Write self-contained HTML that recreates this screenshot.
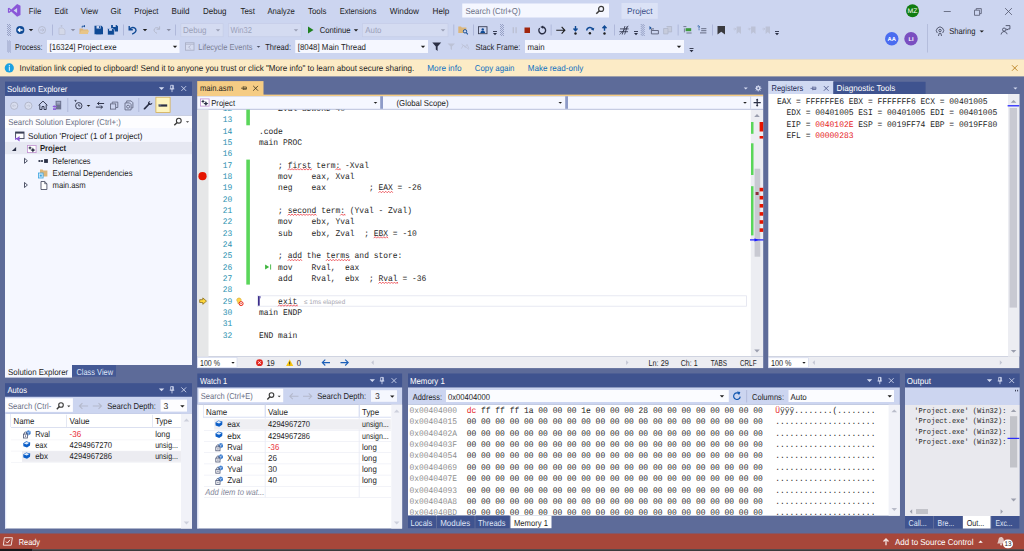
<!DOCTYPE html><html><head><meta charset="utf-8"><title>Project (Debugging) - Microsoft Visual Studio</title><style>html,body{margin:0;padding:0}body{width:1024px;height:551px;overflow:hidden;background:#5d6b99;font-family:'Liberation Sans',sans-serif}#r{display:block;position:absolute;left:0;top:0}#r text{white-space:pre}</style></head><body><svg id="r" width="1024" height="551" viewBox="0 0 1024 551" xml:space="preserve"><defs><clipPath id="edclip"><rect x="197" y="109.7" width="554" height="247"/></clipPath><clipPath id="memclip"><rect x="408" y="404.7" width="482" height="110.9"/></clipPath></defs><rect width="1024" height="551" fill="#5d6b99"/><rect x="0.00" y="0.00" width="1024.00" height="59.50" fill="#ccd5f0"/>
<svg x="7.60" y="3.80" width="13.2" height="13.2" viewBox="0 0 13.2 13.2" overflow="visible"><path d="M9.5 0.3L12.9 1.9V11.3L9.5 12.9L3.7 7.6L1.5 9.3L0.3 8.7V4.5L1.5 3.9L3.7 5.6ZM9.5 4.1L6 6.6L9.5 9.1ZM1.5 5.4V7.8L2.8 6.6Z" fill="#8a56d8"/></svg>
<rect x="462.25" y="3.50" width="146.75" height="14.00" fill="#f5f7ff"/>
<svg x="595.50" y="5.50" width="9" height="9" viewBox="0 0 9 9" overflow="visible"><circle cx="5.6" cy="3.4" r="2.5" fill="none" stroke="#3a3a3a" stroke-width="1.2"/><path d="M3.9 5.2L0.8 8.3" stroke="#3a3a3a" stroke-width="1.5"/></svg>
<rect x="621.50" y="3.00" width="36.25" height="15.75" fill="#dbe2f6"/>
<rect x="943.75" y="11.20" width="7.00" height="0.80" fill="#555a70"/>
<svg x="974.00" y="8.00" width="8" height="8" viewBox="0 0 8 8" overflow="visible"><path d="M0.5 2.2H5.6V7.3H0.5Z M2.2 2V0.6H7.3V5.6H5.8" fill="none" stroke="#50556c" stroke-width="0.8"/></svg>
<svg x="1004.50" y="7.50" width="8" height="8" viewBox="0 0 8 8" overflow="visible"><path d="M0.6 0.6L7.4 7.4M7.4 0.6L0.6 7.4" stroke="#50556c" stroke-width="0.8"/></svg>
<circle cx="912.50" cy="10.75" r="6.50" fill="#107c10"/>
<circle cx="891.75" cy="38.75" r="6.75" fill="#4a6cf0"/>
<circle cx="911.00" cy="38.75" r="6.75" fill="#7a4fc0"/>
<rect x="927.00" y="24.00" width="0.70" height="28.50" fill="#aab3d3"/>
<svg x="935.50" y="26.50" width="9" height="10" viewBox="0 0 9 10" overflow="visible"><circle cx="4.5" cy="4" r="1.2" fill="none" stroke="#3a3f55" stroke-width="0.8"/><path d="M1.8 6.5A3.6 3.6 0 1 1 7.2 6.5M3 9.5L3.6 6.8H5.4L6 9.5" fill="none" stroke="#3a3f55" stroke-width="0.8"/></svg>
<svg x="979.55" y="30.40" width="4.4" height="2.2" viewBox="0 0 4.4 2.2" overflow="visible"><path d="M0 0H4.4L2.2 2.2Z" fill="#1e1e1e"/></svg>
<svg x="1000.50" y="25.00" width="10" height="10" viewBox="0 0 10 10" overflow="visible"><circle cx="3.6" cy="4.6" r="1.6" fill="none" stroke="#3a3f55" stroke-width="0.8"/><path d="M0.6 9.5C1 7.2 2.4 6.6 3.6 6.6S6 7.2 6.6 9.2M5.2 0.6H9.4V4H7.4L6.4 5.2V4H5.8" fill="none" stroke="#3a3f55" stroke-width="0.8"/></svg>
<svg x="7.00" y="24.00" width="4" height="12" viewBox="0 0 4 12" overflow="visible"><rect x="0" y="0" width="1" height="1" fill="#97a1c6"/><rect x="2" y="0" width="1" height="1" fill="#97a1c6"/><rect x="1" y="1" width="1" height="1" fill="#97a1c6"/><rect x="3" y="1" width="1" height="1" fill="#97a1c6"/><rect x="0" y="2" width="1" height="1" fill="#97a1c6"/><rect x="2" y="2" width="1" height="1" fill="#97a1c6"/><rect x="1" y="3" width="1" height="1" fill="#97a1c6"/><rect x="3" y="3" width="1" height="1" fill="#97a1c6"/><rect x="0" y="4" width="1" height="1" fill="#97a1c6"/><rect x="2" y="4" width="1" height="1" fill="#97a1c6"/><rect x="1" y="5" width="1" height="1" fill="#97a1c6"/><rect x="3" y="5" width="1" height="1" fill="#97a1c6"/><rect x="0" y="6" width="1" height="1" fill="#97a1c6"/><rect x="2" y="6" width="1" height="1" fill="#97a1c6"/><rect x="1" y="7" width="1" height="1" fill="#97a1c6"/><rect x="3" y="7" width="1" height="1" fill="#97a1c6"/><rect x="0" y="8" width="1" height="1" fill="#97a1c6"/><rect x="2" y="8" width="1" height="1" fill="#97a1c6"/><rect x="1" y="9" width="1" height="1" fill="#97a1c6"/><rect x="3" y="9" width="1" height="1" fill="#97a1c6"/><rect x="0" y="10" width="1" height="1" fill="#97a1c6"/><rect x="2" y="10" width="1" height="1" fill="#97a1c6"/><rect x="1" y="11" width="1" height="1" fill="#97a1c6"/><rect x="3" y="11" width="1" height="1" fill="#97a1c6"/></svg>
<svg x="7.00" y="40.50" width="4" height="12" viewBox="0 0 4 12" overflow="visible"><rect x="0" y="0" width="1" height="1" fill="#97a1c6"/><rect x="2" y="0" width="1" height="1" fill="#97a1c6"/><rect x="1" y="1" width="1" height="1" fill="#97a1c6"/><rect x="3" y="1" width="1" height="1" fill="#97a1c6"/><rect x="0" y="2" width="1" height="1" fill="#97a1c6"/><rect x="2" y="2" width="1" height="1" fill="#97a1c6"/><rect x="1" y="3" width="1" height="1" fill="#97a1c6"/><rect x="3" y="3" width="1" height="1" fill="#97a1c6"/><rect x="0" y="4" width="1" height="1" fill="#97a1c6"/><rect x="2" y="4" width="1" height="1" fill="#97a1c6"/><rect x="1" y="5" width="1" height="1" fill="#97a1c6"/><rect x="3" y="5" width="1" height="1" fill="#97a1c6"/><rect x="0" y="6" width="1" height="1" fill="#97a1c6"/><rect x="2" y="6" width="1" height="1" fill="#97a1c6"/><rect x="1" y="7" width="1" height="1" fill="#97a1c6"/><rect x="3" y="7" width="1" height="1" fill="#97a1c6"/><rect x="0" y="8" width="1" height="1" fill="#97a1c6"/><rect x="2" y="8" width="1" height="1" fill="#97a1c6"/><rect x="1" y="9" width="1" height="1" fill="#97a1c6"/><rect x="3" y="9" width="1" height="1" fill="#97a1c6"/><rect x="0" y="10" width="1" height="1" fill="#97a1c6"/><rect x="2" y="10" width="1" height="1" fill="#97a1c6"/><rect x="1" y="11" width="1" height="1" fill="#97a1c6"/><rect x="3" y="11" width="1" height="1" fill="#97a1c6"/></svg>
<svg x="16.00" y="25.75" width="8.5" height="8.5" viewBox="0 0 8.5 8.5" overflow="visible"><circle cx="4.25" cy="4.25" r="4.1" fill="#0f4a95"/><path d="M6.6 4.25H2.6M4.2 2.4L2.3 4.25L4.2 6.1" stroke="#fff" stroke-width="1.3" fill="none"/></svg>
<svg x="28.80" y="29.10" width="4.4" height="2.2" viewBox="0 0 4.4 2.2" overflow="visible"><path d="M0 0H4.4L2.2 2.2Z" fill="#1e1e1e"/></svg>
<svg x="38.00" y="26.00" width="8" height="8" viewBox="0 0 8 8" overflow="visible"><circle cx="4" cy="4" r="3.5" fill="none" stroke="#b4b9cc" stroke-width="0.9"/><path d="M2 4H5.8M4.4 2.6L5.9 4L4.4 5.4" stroke="#b4b9cc" stroke-width="0.9" fill="none"/></svg>
<rect x="52.00" y="24.50" width="0.70" height="11.00" fill="#a3add0"/>
<svg x="58.00" y="25.00" width="8" height="10" viewBox="0 0 8 10" overflow="visible"><path d="M1 3H5L7 5V9.5H1ZM2.5 0.8H4.5M3.5 0V2" fill="#d3d8e8" stroke="#b9bfd3" stroke-width="0.7"/></svg>
<svg x="70.80" y="29.10" width="4.4" height="2.2" viewBox="0 0 4.4 2.2" overflow="visible"><path d="M0 0H4.4L2.2 2.2Z" fill="#8a8fa5"/></svg>
<svg x="79.00" y="25.00" width="10.5" height="9.5" viewBox="0 0 10.5 9.5" overflow="visible"><path d="M0.5 9V3.5H3.5L4.3 4.4H9V9Z" fill="#dcb67a"/><path d="M0.5 9L2.3 5.6H10.3L8.6 9Z" fill="#e8c588"/><path d="M3.2 2.6V1.2H6M6 1.2L5 0.3M6 1.2L5 2.1" stroke="#0f4a95" stroke-width="0.9" fill="none"/></svg>
<svg x="94.50" y="25.75" width="8.5" height="8.5" viewBox="0 0 8.5 8.5" overflow="visible"><path d="M0 0H7L8.5 1.5V8.5H0Z" fill="#0f4a95"/><rect x="2" y="0" width="4.2" height="2.8" fill="#ccd5f0"/><rect x="4.6" y="0.4" width="1" height="2" fill="#0f4a95"/><rect x="1.6" y="5" width="5.2" height="3.5" fill="#0f4a95"/></svg>
<svg x="107.50" y="25.00" width="10.5" height="10" viewBox="0 0 10.5 10" overflow="visible"><path d="M3.6 0H9L10.5 1.3V6.4H3.6Z" fill="#0f4a95"/><rect x="5.4" y="0" width="2.8" height="2" fill="#ccd5f0"/><path d="M0 3.6H5.6L6.9 4.9V10H0Z" fill="#0f4a95" stroke="#ccd5f0" stroke-width="0.7"/><rect x="1.6" y="3.8" width="2.8" height="2" fill="#ccd5f0"/></svg>
<rect x="123.00" y="24.50" width="0.70" height="11.00" fill="#a3add0"/>
<svg x="128.00" y="25.50" width="9.5" height="9" viewBox="0 0 9.5 9" overflow="visible"><path d="M1.2 0.6V4.2H4.8" fill="none" stroke="#0f4a95" stroke-width="1.4"/><path d="M1.6 3.8C3 1.6 6.3 1.2 7.6 3.4S7 7.6 4.2 8.6" fill="none" stroke="#0f4a95" stroke-width="1.4"/></svg>
<svg x="142.80" y="29.10" width="4.4" height="2.2" viewBox="0 0 4.4 2.2" overflow="visible"><path d="M0 0H4.4L2.2 2.2Z" fill="#1e1e1e"/></svg>
<svg x="153.00" y="25.50" width="8" height="9" viewBox="0 0 8 9" overflow="visible"><path d="M6.6 0.8V3.8H3.6" fill="none" stroke="#b4b9cc" stroke-width="1"/><path d="M6.3 3.5C5 1.8 2.4 1.6 1.4 3.4S1.8 7 4 7.8" fill="none" stroke="#b4b9cc" stroke-width="1"/></svg>
<svg x="166.55" y="29.10" width="4.4" height="2.2" viewBox="0 0 4.4 2.2" overflow="visible"><path d="M0 0H4.4L2.2 2.2Z" fill="#8a8fa5"/></svg>
<rect x="175.00" y="24.50" width="0.70" height="11.00" fill="#a3add0"/>
<rect x="180.90" y="23.70" width="42.20" height="13.10" fill="#d4dbf1" stroke="#c3cbe7" stroke-width="0.6"/>
<svg x="215.80" y="29.30" width="4.4" height="2.2" viewBox="0 0 4.4 2.2" overflow="visible"><path d="M0 0H4.4L2.2 2.2Z" fill="#9a9fb5"/></svg>
<rect x="228.40" y="23.70" width="72.80" height="13.10" fill="#d4dbf1" stroke="#c3cbe7" stroke-width="0.6"/>
<svg x="293.80" y="29.30" width="4.4" height="2.2" viewBox="0 0 4.4 2.2" overflow="visible"><path d="M0 0H4.4L2.2 2.2Z" fill="#9a9fb5"/></svg>
<svg x="308.00" y="26.50" width="5.5" height="7" viewBox="0 0 5.5 7" overflow="visible"><path d="M0 0L5.5 3.5L0 7Z" fill="#1f801f"/></svg>
<svg x="353.80" y="29.30" width="4.4" height="2.2" viewBox="0 0 4.4 2.2" overflow="visible"><path d="M0 0H4.4L2.2 2.2Z" fill="#1e1e1e"/></svg>
<rect x="362.50" y="23.70" width="85.50" height="13.10" fill="#d4dbf1" stroke="#c3cbe7" stroke-width="0.6"/>
<svg x="440.80" y="29.30" width="4.4" height="2.2" viewBox="0 0 4.4 2.2" overflow="visible"><path d="M0 0H4.4L2.2 2.2Z" fill="#9a9fb5"/></svg>
<rect x="453.50" y="24.50" width="0.70" height="11.00" fill="#a3add0"/>
<svg x="458.00" y="25.50" width="10.5" height="9.5" viewBox="0 0 10.5 9.5" overflow="visible"><path d="M0.3 7.5V1H3L3.8 1.9H8.4V7.5Z" fill="#dcb67a"/><circle cx="7" cy="5.8" r="1.7" fill="#ccd5f0" stroke="#0f4a95" stroke-width="0.9"/><path d="M8.2 7L9.8 8.8" stroke="#0f4a95" stroke-width="1.1"/></svg>
<rect x="473.00" y="24.50" width="0.70" height="11.00" fill="#a3add0"/>
<svg x="478.00" y="25.50" width="9.5" height="9" viewBox="0 0 9.5 9" overflow="visible"><rect x="0.5" y="1.2" width="8.5" height="7" fill="none" stroke="#3a3f55" stroke-width="0.9"/><path d="M2.4 7.4C2.6 5.6 3.6 5.2 4.75 5.2S6.9 5.6 7.1 7.4Z" fill="#0f4a95"/><circle cx="4.75" cy="3.9" r="1.2" fill="#0f4a95"/></svg>
<svg x="493.00" y="31.00" width="4" height="4.5" viewBox="0 0 4 4.5" overflow="visible"><rect x="0" y="0" width="4" height="0.9" fill="#2a2f45"/><path d="M0 2H4L2 4.2Z" fill="#2a2f45"/></svg>
<svg x="500.00" y="24.00" width="4" height="12" viewBox="0 0 4 12" overflow="visible"><rect x="0" y="0" width="1" height="1" fill="#97a1c6"/><rect x="2" y="0" width="1" height="1" fill="#97a1c6"/><rect x="1" y="1" width="1" height="1" fill="#97a1c6"/><rect x="3" y="1" width="1" height="1" fill="#97a1c6"/><rect x="0" y="2" width="1" height="1" fill="#97a1c6"/><rect x="2" y="2" width="1" height="1" fill="#97a1c6"/><rect x="1" y="3" width="1" height="1" fill="#97a1c6"/><rect x="3" y="3" width="1" height="1" fill="#97a1c6"/><rect x="0" y="4" width="1" height="1" fill="#97a1c6"/><rect x="2" y="4" width="1" height="1" fill="#97a1c6"/><rect x="1" y="5" width="1" height="1" fill="#97a1c6"/><rect x="3" y="5" width="1" height="1" fill="#97a1c6"/><rect x="0" y="6" width="1" height="1" fill="#97a1c6"/><rect x="2" y="6" width="1" height="1" fill="#97a1c6"/><rect x="1" y="7" width="1" height="1" fill="#97a1c6"/><rect x="3" y="7" width="1" height="1" fill="#97a1c6"/><rect x="0" y="8" width="1" height="1" fill="#97a1c6"/><rect x="2" y="8" width="1" height="1" fill="#97a1c6"/><rect x="1" y="9" width="1" height="1" fill="#97a1c6"/><rect x="3" y="9" width="1" height="1" fill="#97a1c6"/><rect x="0" y="10" width="1" height="1" fill="#97a1c6"/><rect x="2" y="10" width="1" height="1" fill="#97a1c6"/><rect x="1" y="11" width="1" height="1" fill="#97a1c6"/><rect x="3" y="11" width="1" height="1" fill="#97a1c6"/></svg>
<rect x="512.60" y="27.20" width="1.40" height="6.00" fill="#bcc1d4"/>
<rect x="515.40" y="27.20" width="1.40" height="6.00" fill="#bcc1d4"/>
<rect x="524.50" y="27.50" width="5.50" height="5.50" fill="#a1260d"/>
<svg x="537.50" y="25.50" width="8.5" height="9" viewBox="0 0 8.5 9" overflow="visible"><path d="M2.2 2.6A3.4 3.4 0 1 0 5.2 1.5" fill="none" stroke="#2a2f45" stroke-width="1.35"/><path d="M5.6 0L5.6 3.2L2.8 1.6Z" fill="#2a2f45"/></svg>
<rect x="550.75" y="24.50" width="0.70" height="11.00" fill="#a3add0"/>
<svg x="556.25" y="26.00" width="9.5" height="8.5" viewBox="0 0 9.5 8.5" overflow="visible"><path d="M0 4.25H8.4M5.4 0.9L8.6 4.25L5.4 7.6" fill="none" stroke="#1e1e1e" stroke-width="1.1"/></svg>
<svg x="572.50" y="25.50" width="6" height="9.5" viewBox="0 0 6 9.5" overflow="visible"><path d="M3 0.6V4.6M1 3L3 5.2L5 3" fill="none" stroke="#0f4a95" stroke-width="1.4"/><circle cx="3" cy="8" r="1.2" fill="#1e1e1e"/></svg>
<svg x="585.50" y="25.50" width="9.5" height="9.5" viewBox="0 0 9.5 9.5" overflow="visible"><path d="M1.2 5C1.4 1.6 6.4 0.8 7.6 4.2" fill="none" stroke="#0f4a95" stroke-width="1.4"/><path d="M8.8 2.2L8 5.2L5.4 3.8Z" fill="#0f4a95"/><circle cx="4.4" cy="7.8" r="1.2" fill="#1e1e1e"/></svg>
<svg x="601.50" y="25.50" width="6" height="9.5" viewBox="0 0 6 9.5" overflow="visible"><path d="M3 5.2V1.2M1 2.8L3 0.6L5 2.8" fill="none" stroke="#0f4a95" stroke-width="1.4"/><circle cx="3" cy="8" r="1.2" fill="#1e1e1e"/></svg>
<rect x="614.00" y="24.50" width="0.70" height="11.00" fill="#a3add0"/>
<svg x="619.00" y="25.50" width="10" height="9.5" viewBox="0 0 10 9.5" overflow="visible"><path d="M3.2 9L6 0.5M5.6 9L8.4 0.5M1 3.4H9.6M0.4 6.2H9" fill="none" stroke="#2a2f45" stroke-width="0.8"/><path d="M0.5 9L9.5 0.5" stroke="#2a2f45" stroke-width="0.6"/></svg>
<svg x="634.00" y="31.00" width="4" height="4.5" viewBox="0 0 4 4.5" overflow="visible"><rect x="0" y="0" width="4" height="0.9" fill="#2a2f45"/><path d="M0 2H4L2 4.2Z" fill="#2a2f45"/></svg>
<svg x="640.75" y="24.00" width="4" height="12" viewBox="0 0 4 12" overflow="visible"><rect x="0" y="0" width="1" height="1" fill="#97a1c6"/><rect x="2" y="0" width="1" height="1" fill="#97a1c6"/><rect x="1" y="1" width="1" height="1" fill="#97a1c6"/><rect x="3" y="1" width="1" height="1" fill="#97a1c6"/><rect x="0" y="2" width="1" height="1" fill="#97a1c6"/><rect x="2" y="2" width="1" height="1" fill="#97a1c6"/><rect x="1" y="3" width="1" height="1" fill="#97a1c6"/><rect x="3" y="3" width="1" height="1" fill="#97a1c6"/><rect x="0" y="4" width="1" height="1" fill="#97a1c6"/><rect x="2" y="4" width="1" height="1" fill="#97a1c6"/><rect x="1" y="5" width="1" height="1" fill="#97a1c6"/><rect x="3" y="5" width="1" height="1" fill="#97a1c6"/><rect x="0" y="6" width="1" height="1" fill="#97a1c6"/><rect x="2" y="6" width="1" height="1" fill="#97a1c6"/><rect x="1" y="7" width="1" height="1" fill="#97a1c6"/><rect x="3" y="7" width="1" height="1" fill="#97a1c6"/><rect x="0" y="8" width="1" height="1" fill="#97a1c6"/><rect x="2" y="8" width="1" height="1" fill="#97a1c6"/><rect x="1" y="9" width="1" height="1" fill="#97a1c6"/><rect x="3" y="9" width="1" height="1" fill="#97a1c6"/><rect x="0" y="10" width="1" height="1" fill="#97a1c6"/><rect x="2" y="10" width="1" height="1" fill="#97a1c6"/><rect x="1" y="11" width="1" height="1" fill="#97a1c6"/><rect x="3" y="11" width="1" height="1" fill="#97a1c6"/></svg>
<svg x="649.00" y="25.50" width="10" height="9" viewBox="0 0 10 9" overflow="visible"><path d="M0.5 0.5L2.6 2.4L0.5 4.2Z" fill="#0f4a95"/><path d="M2.4 5H9.4V8.4H2.4ZM2.4 5V3.4H5" fill="none" stroke="#5a6078" stroke-width="0.9"/></svg>
<svg x="663.00" y="25.50" width="10" height="9" viewBox="0 0 10 9" overflow="visible"><path d="M0.6 3H5V8.4H0.6ZM3.6 1H8.6V6.4H5" fill="#c6cbdc" stroke="#b0b6ca" stroke-width="0.8"/></svg>
<rect x="677.75" y="24.50" width="0.70" height="11.00" fill="#a3add0"/>
<svg x="683.00" y="26.00" width="9" height="8" viewBox="0 0 9 8" overflow="visible"><path d="M0.4 0.6H3.4" stroke="#5a6078" stroke-width="0.8"/><rect x="2.6" y="2.2" width="5.6" height="3" fill="#3c9a3c"/><path d="M3.4 7H8.6" stroke="#5a6078" stroke-width="0.8"/><path d="M1.4 2.4V6.4" stroke="#5a6078" stroke-width="0.7"/></svg>
<svg x="697.00" y="25.50" width="10" height="9" viewBox="0 0 10 9" overflow="visible"><path d="M0.6 0.6C2 -0.2 3 1 2 2.2V3" fill="none" stroke="#0f4a95" stroke-width="0.9"/><rect x="1.6" y="3.8" width="0.9" height="0.9" fill="#0f4a95"/><path d="M4.2 3.2H9.4M4.2 5.2H9.4M3 7.4H9.4" stroke="#5a6078" stroke-width="0.9"/></svg>
<rect x="712.00" y="24.50" width="0.70" height="11.00" fill="#a3add0"/>
<svg x="717.50" y="26.00" width="7.5" height="8.5" viewBox="0 0 7.5 8.5" overflow="visible"><path d="M0 0H7.5V8.5L3.75 5.8L0 8.5Z" fill="#3a3a3e"/></svg>
<svg x="733.00" y="26.00" width="9" height="8.5" viewBox="0 0 9 8.5" overflow="visible"><path d="M3.6 0.5H8V8L5.8 6L3.6 8Z" fill="#bcc2d6"/><path d="M0.4 3H2.8M1.6 1.8L2.8 3L1.6 4.2" stroke="#bcc2d6" stroke-width="0.8" fill="none"/></svg>
<svg x="747.50" y="26.00" width="9" height="8.5" viewBox="0 0 9 8.5" overflow="visible"><path d="M3.6 0.5H8V8L5.8 6L3.6 8Z" fill="#bcc2d6"/><path d="M0.4 3H2.8M1.6 1.8L2.8 3L1.6 4.2" stroke="#bcc2d6" stroke-width="0.8" fill="none"/></svg>
<svg x="762.00" y="26.00" width="9" height="8.5" viewBox="0 0 9 8.5" overflow="visible"><path d="M3.6 0.5H8V8L5.8 6L3.6 8Z" fill="#bcc2d6"/><path d="M0.4 3H2.8M1.6 1.8L2.8 3L1.6 4.2" stroke="#bcc2d6" stroke-width="0.8" fill="none"/></svg>
<svg x="775.00" y="31.00" width="4" height="4.5" viewBox="0 0 4 4.5" overflow="visible"><rect x="0" y="0" width="4" height="0.9" fill="#2a2f45"/><path d="M0 2H4L2 4.2Z" fill="#2a2f45"/></svg>
<rect x="47.00" y="40.00" width="132.50" height="13.00" fill="#f5f7ff"/>
<svg x="172.80" y="45.70" width="4.4" height="2.2" viewBox="0 0 4.4 2.2" overflow="visible"><path d="M0 0H4.4L2.2 2.2Z" fill="#1e1e1e"/></svg>
<svg x="185.00" y="42.30" width="9.5" height="8.4" viewBox="0 0 9.5 8.4" overflow="visible"><rect x="0.5" y="0.5" width="8.5" height="7.4" fill="#d6dcf0" stroke="#a9afc6" stroke-width="0.9"/><path d="M0.5 2H9" stroke="#a9afc6" stroke-width="0.7"/><path d="M5.6 3.2L3.6 4.9L5.6 6.6" stroke="#a9afc6" stroke-width="0.8" fill="none"/></svg>
<svg x="256.70" y="45.90" width="3.6" height="1.8" viewBox="0 0 3.6 1.8" overflow="visible"><path d="M0 0H3.6L1.8 1.8Z" fill="#4a4f63"/></svg>
<rect x="295.25" y="40.00" width="132.75" height="13.00" fill="#f5f7ff"/>
<svg x="420.80" y="45.70" width="4.4" height="2.2" viewBox="0 0 4.4 2.2" overflow="visible"><path d="M0 0H4.4L2.2 2.2Z" fill="#1e1e1e"/></svg>
<svg x="432.00" y="42.00" width="9.5" height="9.5" viewBox="0 0 9.5 9.5" overflow="visible"><path d="M0.3 0.6H9.2L5.6 4.6V9L3.8 7.6V4.6Z" fill="#2a2f45"/></svg>
<svg x="447.00" y="42.50" width="8.5" height="8.5" viewBox="0 0 8.5 8.5" overflow="visible"><path d="M0.5 1H8L5 4V7.6L3.6 6.6V4Z" fill="#bcc2d6"/></svg>
<svg x="461.00" y="43.00" width="8.5" height="7" viewBox="0 0 8.5 7" overflow="visible"><path d="M0.4 5.6L2.4 2L4.2 4.4L6 1.4L8 5.6M0.5 1L8 6.4" fill="none" stroke="#bcc2d6" stroke-width="0.8"/></svg>
<rect x="525.00" y="40.00" width="159.00" height="13.00" fill="#f5f7ff"/>
<svg x="676.80" y="45.70" width="4.4" height="2.2" viewBox="0 0 4.4 2.2" overflow="visible"><path d="M0 0H4.4L2.2 2.2Z" fill="#1e1e1e"/></svg>
<svg x="689.50" y="48.00" width="4" height="4.5" viewBox="0 0 4 4.5" overflow="visible"><rect x="0" y="0" width="4" height="0.9" fill="#2a2f45"/><path d="M0 2H4L2 4.2Z" fill="#2a2f45"/></svg>
<rect x="0.00" y="59.20" width="1024.00" height="17.20" fill="#fcebc6"/>
<circle cx="9.30" cy="67.90" r="4.60" fill="#1ba1e2"/>
<rect x="8.85" y="65.00" width="0.90" height="1.00" fill="#fff"/>
<rect x="8.85" y="66.60" width="0.90" height="4.20" fill="#fff"/>
<svg x="1011.50" y="64.75" width="6.5" height="6.5" viewBox="0 0 6.5 6.5" overflow="visible"><path d="M0.5 0.5L6 6M6 0.5L0.5 6" stroke="#b8801f" stroke-width="0.9"/></svg>
<rect x="5.00" y="81.60" width="187.00" height="14.20" fill="#3f538f"/>
<svg x="158.85" y="87.25" width="5.4" height="2.7" viewBox="0 0 5.4 2.7" overflow="visible"><path d="M0 0H5.4L2.7 2.7Z" fill="#d6dcf2"/></svg>
<svg x="169.50" y="84.90" width="5" height="7.5" viewBox="0 0 5 7.5" overflow="visible"><path d="M1.2 0.4H3.8V4H1.2ZM0.2 4H4.8M2.5 4V7.2" fill="none" stroke="#d6dcf2" stroke-width="0.8"/><path d="M3.3 0.4V4" stroke="#d6dcf2" stroke-width="0.9"/></svg>
<svg x="180.95" y="85.70" width="5.6" height="5.6" viewBox="0 0 5.6 5.6" overflow="visible"><path d="M0.4 0.4L5.2 5.2M5.2 0.4L0.4 5.2" stroke="#d6dcf2" stroke-width="0.85"/></svg>
<rect x="5.00" y="96.00" width="187.00" height="19.50" fill="#ccd5f0"/>
<svg x="10.00" y="101.60" width="8.4" height="8.4" viewBox="0 0 8.4 8.4" overflow="visible"><circle cx="4.2" cy="4.2" r="3.6" fill="#d9deef" stroke="#b4b9cc" stroke-width="1"/><path d="M6 4.2H2.6M3.9 2.8L2.5 4.2L3.9 5.6" stroke="#c2c7d8" stroke-width="0.9" fill="none"/></svg>
<svg x="24.20" y="101.60" width="8.4" height="8.4" viewBox="0 0 8.4 8.4" overflow="visible"><circle cx="4.2" cy="4.2" r="3.6" fill="#d9deef" stroke="#b4b9cc" stroke-width="1"/><path d="M2.4 4.2H5.8M4.5 2.8L5.9 4.2L4.5 5.6" stroke="#c2c7d8" stroke-width="0.9" fill="none"/></svg>
<svg x="38.00" y="100.30" width="10" height="10" viewBox="0 0 10 10" overflow="visible"><path d="M0.6 5L5 0.8L9.4 5M1.8 4.4V9.2H4V6.2H6V9.2H8.2V4.4" fill="none" stroke="#2a2f45" stroke-width="0.9"/></svg>
<svg x="52.00" y="100.30" width="10" height="10" viewBox="0 0 10 10" overflow="visible"><rect x="3.6" y="0.5" width="5.6" height="8.6" fill="#6d7390"/><path d="M4.6 2H8.2M4.6 3.6H8.2" stroke="#ccd5f0" stroke-width="0.7"/><path d="M0.4 6.2L2.6 4.6V5.6H4.8V6.8H2.6V7.8Z" fill="#8b57d6"/><rect x="1" y="8" width="3" height="1.6" fill="#8b57d6"/></svg>
<rect x="67.50" y="98.00" width="0.70" height="14.00" fill="#a3add0"/>
<svg x="74.00" y="99.80" width="9" height="10.5" viewBox="0 0 9 10.5" overflow="visible"><circle cx="4.8" cy="6" r="3.2" fill="none" stroke="#2a2f45" stroke-width="0.9"/><path d="M4.8 4.2V6.2H6.4" stroke="#2a2f45" stroke-width="0.8" fill="none"/><path d="M0.4 0.6H2.6" stroke="#2a2f45" stroke-width="0.7"/><path d="M1.5 0.6V2.2" stroke="#2a2f45" stroke-width="0.7"/></svg>
<svg x="86.70" y="104.90" width="3.6" height="1.8" viewBox="0 0 3.6 1.8" overflow="visible"><path d="M0 0H3.6L1.8 1.8Z" fill="#1e1e1e"/></svg>
<svg x="95.50" y="101.30" width="9" height="8" viewBox="0 0 9 8" overflow="visible"><path d="M2 2.2H8.6M2 2.2L3.8 0.6M2 2.2L3.8 3.8M7 5.8H0.4M7 5.8L5.2 4.2M7 5.8L5.2 7.4" fill="none" stroke="#2a2f45" stroke-width="0.95"/></svg>
<svg x="110.00" y="101.30" width="8.5" height="8.5" viewBox="0 0 8.5 8.5" overflow="visible"><rect x="0.5" y="2.6" width="5.2" height="5.2" fill="#ccd5f0" stroke="#5a6078" stroke-width="0.8"/><path d="M2.2 2.4V0.8H7.8V6.2H6" fill="none" stroke="#5a6078" stroke-width="0.8"/></svg>
<svg x="124.50" y="100.30" width="10.5" height="10.5" viewBox="0 0 10.5 10.5" overflow="visible"><path d="M0.5 2.6H5L6.6 4.2V9.6H0.5Z" fill="#ccd5f0" stroke="#5a6078" stroke-width="0.8"/><path d="M2.2 2.4V0.6H6.6L8.4 2.4V7.6H6.8" fill="none" stroke="#5a6078" stroke-width="0.8"/><circle cx="3.6" cy="6.4" r="1.5" fill="none" stroke="#5a6078" stroke-width="0.8"/></svg>
<rect x="138.50" y="98.00" width="0.70" height="14.00" fill="#a3add0"/>
<svg x="143.00" y="100.60" width="10" height="9.5" viewBox="0 0 10 9.5" overflow="visible"><path d="M9.4 2.2C9.2 3.8 7.8 4.8 6.2 4.4L2 8.8C1.2 9.4 0.2 8.6 0.8 7.6L5 3.4C4.6 1.8 5.8 0.4 7.4 0.4L6.2 2L7.4 3.2Z" fill="#2a2f45"/></svg>
<rect x="155.90" y="97.20" width="14.20" height="15.20" fill="#fdf4bf" stroke="#d3aa4a" stroke-width="0.75"/>
<svg x="158.60" y="103.80" width="9" height="3.5" viewBox="0 0 9 3.5" overflow="visible"><rect x="0" y="0.6" width="8.6" height="2.2" fill="#2a2f45"/><rect x="0" y="0.6" width="2.6" height="1" fill="#8f94a8"/></svg>
<rect x="5.00" y="115.50" width="187.00" height="12.50" fill="#fdfdff"/>
<svg x="173.50" y="117.50" width="8.5" height="8.5" viewBox="0 0 8.5 8.5" overflow="visible"><circle cx="5.3" cy="3.2" r="2.4" fill="none" stroke="#3a3a3a" stroke-width="1.1"/><path d="M3.7 4.9L0.8 7.8" stroke="#3a3a3a" stroke-width="1.4"/></svg>
<svg x="185.90" y="121.20" width="3.2" height="1.6" viewBox="0 0 3.2 1.6" overflow="visible"><path d="M0 0H3.2L1.6 1.6Z" fill="#3a3a3a"/></svg>
<rect x="5.00" y="128.00" width="187.00" height="237.00" fill="#f5f7ff"/>
<rect x="5.00" y="141.90" width="187.00" height="12.30" fill="#e6e8f2"/>
<svg x="14.00" y="131.50" width="10.5" height="10" viewBox="0 0 10.5 10" overflow="visible"><rect x="1.6" y="0.5" width="8.4" height="6.6" fill="#fff" stroke="#3a3f55" stroke-width="0.9"/><rect x="1.6" y="0.5" width="8.4" height="1.6" fill="#3a3f55"/><path d="M5.6 4.4L2.6 6.8L1 6V8.4L2.6 7.7L5.6 10V4.4ZM1.6 6.6V7.9L2.4 7.2Z" fill="#8b57d6"/></svg>
<svg x="11.50" y="146.50" width="5" height="5" viewBox="0 0 5 5" overflow="visible"><path d="M4.6 0.4V4.6H0.4Z" fill="#2a2f45"/></svg>
<svg x="27.00" y="145.00" width="9.5" height="8" viewBox="0 0 9.5 8" overflow="visible"><rect x="0.4" y="0.4" width="8.7" height="7.2" fill="#fff" stroke="#c08fd0" stroke-width="0.8"/><path d="M3 0.9L3.6 2.3L5 2.9L3.6 3.5L3 4.9L2.4 3.5L1 2.9L2.4 2.3Z M5.9 2.6L6.7 4.3L8.4 5.1L6.7 5.9L5.9 7.6L5.1 5.9L3.4 5.1L5.1 4.3Z" fill="#2a2f45"/></svg>
<svg x="24.00" y="157.80" width="4" height="6" viewBox="0 0 4 6" overflow="visible"><path d="M0.5 0.5L3.4 3L0.5 5.5Z" fill="none" stroke="#2a2f45" stroke-width="0.8"/></svg>
<svg x="38.50" y="158.50" width="10" height="5" viewBox="0 0 10 5" overflow="visible"><rect x="0" y="1.6" width="1.8" height="1.8" fill="#2a2f45"/><rect x="2.6" y="1.6" width="1.8" height="1.8" fill="#2a2f45"/><path d="M1.8 2.5H2.6" stroke="#2a2f45" stroke-width="0.6"/><rect x="5.6" y="0.6" width="3.8" height="3.8" fill="#2a2f45"/></svg>
<svg x="38.00" y="169.00" width="10" height="9.5" viewBox="0 0 10 9.5" overflow="visible"><path d="M2 0.6H4.6L5.4 1.6H9.4V7.4H2Z" fill="#dcb67a"/><rect x="0.5" y="4" width="4.6" height="5" fill="#d6ecfa" stroke="#3ba4e0" stroke-width="0.8"/><rect x="1.8" y="5.6" width="2" height="2" fill="#3ba4e0"/></svg>
<svg x="24.00" y="182.00" width="4" height="6" viewBox="0 0 4 6" overflow="visible"><path d="M0.5 0.5L3.4 3L0.5 5.5Z" fill="none" stroke="#2a2f45" stroke-width="0.8"/></svg>
<svg x="40.50" y="181.00" width="7" height="9" viewBox="0 0 7 9" overflow="visible"><path d="M0.5 0.5H4.2L6.4 2.7V8.5H0.5Z" fill="#fff" stroke="#3a3f55" stroke-width="0.8"/><path d="M4.2 0.5V2.7H6.4" fill="none" stroke="#3a3f55" stroke-width="0.7"/></svg>
<rect x="5.00" y="364.80" width="67.00" height="12.80" fill="#f5f7ff"/>
<rect x="72.00" y="365.00" width="44.00" height="11.60" fill="#445995"/>
<rect x="5.00" y="383.20" width="187.00" height="13.60" fill="#3f538f"/>
<svg x="158.85" y="388.55" width="5.4" height="2.7" viewBox="0 0 5.4 2.7" overflow="visible"><path d="M0 0H5.4L2.7 2.7Z" fill="#d6dcf2"/></svg>
<svg x="169.50" y="386.20" width="5" height="7.5" viewBox="0 0 5 7.5" overflow="visible"><path d="M1.2 0.4H3.8V4H1.2ZM0.2 4H4.8M2.5 4V7.2" fill="none" stroke="#d6dcf2" stroke-width="0.8"/><path d="M3.3 0.4V4" stroke="#d6dcf2" stroke-width="0.9"/></svg>
<svg x="180.95" y="387.00" width="5.6" height="5.6" viewBox="0 0 5.6 5.6" overflow="visible"><path d="M0.4 0.4L5.2 5.2M5.2 0.4L0.4 5.2" stroke="#d6dcf2" stroke-width="0.85"/></svg>
<rect x="5.00" y="396.80" width="187.00" height="17.10" fill="#ccd5f0"/>
<rect x="5.20" y="398.30" width="67.70" height="13.60" fill="#fdfdff"/>
<svg x="56.00" y="402.00" width="8" height="8" viewBox="0 0 8 8" overflow="visible"><circle cx="5" cy="3" r="2.3" fill="none" stroke="#3a3a3a" stroke-width="1.1"/><path d="M3.4 4.6L0.8 7.3" stroke="#3a3a3a" stroke-width="1.4"/></svg>
<svg x="67.20" y="405.60" width="3.2" height="1.6" viewBox="0 0 3.2 1.6" overflow="visible"><path d="M0 0H3.2L1.6 1.6Z" fill="#3a3a3a"/></svg>
<svg x="78.60" y="402.50" width="9.5" height="7" viewBox="0 0 9.5 7" overflow="visible"><path d="M9.5 3.5H1M3.8 0.6L0.8 3.5L3.8 6.4" fill="none" stroke="#b4b9cc" stroke-width="1.1"/></svg>
<svg x="92.80" y="402.50" width="9.5" height="7" viewBox="0 0 9.5 7" overflow="visible"><path d="M0 3.5H8.5M5.7 0.6L8.7 3.5L5.7 6.4" fill="none" stroke="#b4b9cc" stroke-width="1.1"/></svg>
<rect x="160.60" y="399.60" width="26.40" height="12.00" fill="#fdfdff"/>
<svg x="180.20" y="405.30" width="4.4" height="2.2" viewBox="0 0 4.4 2.2" overflow="visible"><path d="M0 0H4.4L2.2 2.2Z" fill="#1e1e1e"/></svg>
<rect x="5.00" y="413.90" width="187.00" height="114.60" fill="#fff"/>
<rect x="5.00" y="413.90" width="1.20" height="114.60" fill="#e3e9fa"/>
<rect x="10.30" y="413.90" width="0.60" height="13.30" fill="#d5dcf2"/>
<rect x="11.00" y="427.20" width="170.00" height="0.70" fill="#ccd3ea"/>
<rect x="66.00" y="414.80" width="0.70" height="12.40" fill="#d9deee"/>
<rect x="152.00" y="414.80" width="0.70" height="12.40" fill="#d9deee"/>
<rect x="22.00" y="451.00" width="159.00" height="10.80" fill="#ececf1"/>
<rect x="11.00" y="439.60" width="170.00" height="0.60" fill="#eff0f6"/>
<rect x="11.00" y="450.80" width="170.00" height="0.60" fill="#eff0f6"/>
<rect x="11.00" y="462.00" width="170.00" height="0.60" fill="#eff0f6"/>
<svg x="22.80" y="429.80" width="8" height="8.6" viewBox="0 0 8 8.6" overflow="visible"><path d="M3.2 1.6L5.6 0.4L7.8 1.5V4.3L5.4 5.6L3.2 4.5Z" fill="#3f7fd0"/><path d="M3.2 1.6L5.4 2.7L7.8 1.5M5.4 2.7V5.6" stroke="#cfe0f7" stroke-width="0.6" fill="none"/><rect x="0.6" y="4.3" width="4.2" height="3.9" fill="#f8f8fb" stroke="#4f5876" stroke-width="0.8"/><path d="M1.5 4.3V3.2C1.5 1.9 3.9 1.9 3.9 3.2V4.3" fill="none" stroke="#4f5876" stroke-width="0.8"/><rect x="2.3" y="5.6" width="0.9" height="1.4" fill="#4f5876"/></svg>
<svg x="23.00" y="441.00" width="7.4" height="6.8" viewBox="0 0 7.4 6.8" overflow="visible"><path d="M0.2 2.2L3.2 0.2L7.2 1.4L7 4.6L4 6.6L0.4 5.2Z" fill="#0c5fc8"/><path d="M0.9 2.4L3.3 0.9L6.3 1.8L3.9 3.4Z" fill="#e4effc"/></svg>
<svg x="23.00" y="452.20" width="7.4" height="6.8" viewBox="0 0 7.4 6.8" overflow="visible"><path d="M0.2 2.2L3.2 0.2L7.2 1.4L7 4.6L4 6.6L0.4 5.2Z" fill="#0c5fc8"/><path d="M0.9 2.4L3.3 0.9L6.3 1.8L3.9 3.4Z" fill="#e4effc"/></svg>
<rect x="181.00" y="413.90" width="11.00" height="114.60" fill="#f1f2f8"/>
<svg x="183.70" y="418.60" width="5.6" height="2.8" viewBox="0 0 5.6 2.8" overflow="visible"><path d="M0 2.8L2.8 0L5.6 2.8Z" fill="#cdd0dc"/></svg>
<svg x="183.70" y="521.60" width="5.6" height="2.8" viewBox="0 0 5.6 2.8" overflow="visible"><path d="M0 0H5.6L2.8 2.8Z" fill="#cdd0dc"/></svg>
<rect x="197.20" y="81.10" width="66.30" height="14.40" fill="#f5cc84"/>
<rect x="197.20" y="94.60" width="566.00" height="1.60" fill="#f5cc84"/>
<svg x="241.00" y="85.80" width="6" height="5" viewBox="0 0 6 5" overflow="visible"><path d="M2.2 0.6V4.2M2.2 1.2H5.4V3.4H2.2M5.4 2.9H2.4M0 2.4H2.2" fill="none" stroke="#3a3320" stroke-width="0.7"/></svg>
<svg x="252.80" y="85.50" width="5.6" height="5.6" viewBox="0 0 5.6 5.6" overflow="visible"><path d="M0.4 0.4L5.2 5.2M5.2 0.4L0.4 5.2" stroke="#3a3320" stroke-width="0.85"/></svg>
<svg x="743.75" y="87.40" width="4.0" height="2.0" viewBox="0 0 4.0 2.0" overflow="visible"><path d="M0 0H4.0L2.0 2.0Z" fill="#d6dcf2"/></svg>
<svg x="755.00" y="85.00" width="6.5" height="6.5" viewBox="0 0 6.5 6.5" overflow="visible"><circle cx="3.25" cy="3.25" r="1.7" fill="none" stroke="#d6dcf2" stroke-width="1.3"/><path d="M3.25 0V6.5M0 3.25H6.5M0.95 0.95L5.55 5.55M5.55 0.95L0.95 5.55" stroke="#d6dcf2" stroke-width="0.8"/><circle cx="3.25" cy="3.25" r="0.9" fill="#5d6b99"/></svg>
<rect x="197.20" y="96.20" width="566.00" height="13.00" fill="#f5f7ff"/>
<rect x="197.20" y="108.80" width="566.00" height="0.80" fill="#b9c4e6"/>
<rect x="380.20" y="96.20" width="2.80" height="12.60" fill="#8e9bc8"/>
<rect x="565.20" y="96.20" width="2.80" height="12.60" fill="#8e9bc8"/>
<rect x="750.30" y="96.20" width="0.80" height="12.60" fill="#c5cce4"/>
<svg x="200.00" y="98.50" width="9.5" height="8" viewBox="0 0 9.5 8" overflow="visible"><rect x="0.4" y="0.4" width="8.7" height="7.2" fill="#fff" stroke="#c08fd0" stroke-width="0.8"/><path d="M3 0.9L3.6 2.3L5 2.9L3.6 3.5L3 4.9L2.4 3.5L1 2.9L2.4 2.3Z M5.9 2.6L6.7 4.3L8.4 5.1L6.7 5.9L5.9 7.6L5.1 5.9L3.4 5.1L5.1 4.3Z" fill="#2a2f45"/></svg>
<svg x="373.70" y="101.90" width="3.6" height="1.8" viewBox="0 0 3.6 1.8" overflow="visible"><path d="M0 0H3.6L1.8 1.8Z" fill="#1e1e1e"/></svg>
<svg x="558.45" y="101.90" width="3.6" height="1.8" viewBox="0 0 3.6 1.8" overflow="visible"><path d="M0 0H3.6L1.8 1.8Z" fill="#1e1e1e"/></svg>
<svg x="743.20" y="101.90" width="3.6" height="1.8" viewBox="0 0 3.6 1.8" overflow="visible"><path d="M0 0H3.6L1.8 1.8Z" fill="#1e1e1e"/></svg>
<svg x="753.20" y="98.60" width="8" height="8" viewBox="0 0 8 8" overflow="visible"><path d="M4 0.4V7.6M0.4 4H7.6" stroke="#2a2f45" stroke-width="1.2"/><path d="M4 0L5.3 1.6H2.7ZM4 8L5.3 6.4H2.7Z" fill="#2a2f45"/></svg>
<rect x="197.20" y="109.60" width="554.00" height="247.00" fill="#fff"/>
<rect x="197.20" y="109.60" width="11.30" height="247.00" fill="#e6e7e8"/>
<rect x="246.30" y="109.60" width="3.60" height="15.70" fill="#5ad65a"/>
<rect x="246.30" y="159.60" width="3.60" height="125.00" fill="#5ad65a"/>
<rect x="257.40" y="295.80" width="489.20" height="10.40" fill="#fff" stroke="#e2e3ee" stroke-width="0.8"/>
<rect x="258.00" y="296.10" width="1.70" height="9.60" fill="#3b2d8a"/>
<rect x="259.70" y="296.10" width="0.90" height="2.20" fill="#6a5fb0"/>
<svg x="287.68" y="168.09" width="24.4" height="2.6" viewBox="0 0 24.4 2.6" overflow="visible"><path d="M0 2.0L1.45 0.5L2.90 2.0L4.35 0.5L5.80 2.0L7.25 0.5L8.70 2.0L10.15 0.5L11.60 2.0L13.05 0.5L14.50 2.0L15.95 0.5L17.40 2.0L18.85 0.5L20.30 2.0L21.75 0.5L23.20 2.0L23.90 0.5" fill="none" stroke="#e8242c" stroke-width="0.7"/></svg>
<svg x="335.48" y="168.09" width="5.28" height="2.6" viewBox="0 0 5.28 2.6" overflow="visible"><path d="M0 2.0L1.45 0.5L2.90 2.0L4.35 0.5L4.78 2.0" fill="none" stroke="#e8242c" stroke-width="0.7"/></svg>
<svg x="378.50" y="190.78" width="14.84" height="2.6" viewBox="0 0 14.84 2.6" overflow="visible"><path d="M0 2.0L1.45 0.5L2.90 2.0L4.35 0.5L5.80 2.0L7.25 0.5L8.70 2.0L10.15 0.5L11.60 2.0L13.05 0.5L14.34 2.0" fill="none" stroke="#e8242c" stroke-width="0.7"/></svg>
<svg x="287.68" y="213.48" width="29.18" height="2.6" viewBox="0 0 29.18 2.6" overflow="visible"><path d="M0 2.0L1.45 0.5L2.90 2.0L4.35 0.5L5.80 2.0L7.25 0.5L8.70 2.0L10.15 0.5L11.60 2.0L13.05 0.5L14.50 2.0L15.95 0.5L17.40 2.0L18.85 0.5L20.30 2.0L21.75 0.5L23.20 2.0L24.65 0.5L26.10 2.0L27.55 0.5L28.68 2.0" fill="none" stroke="#e8242c" stroke-width="0.7"/></svg>
<svg x="340.26" y="213.48" width="5.28" height="2.6" viewBox="0 0 5.28 2.6" overflow="visible"><path d="M0 2.0L1.45 0.5L2.90 2.0L4.35 0.5L4.78 2.0" fill="none" stroke="#e8242c" stroke-width="0.7"/></svg>
<svg x="373.72" y="236.17" width="14.84" height="2.6" viewBox="0 0 14.84 2.6" overflow="visible"><path d="M0 2.0L1.45 0.5L2.90 2.0L4.35 0.5L5.80 2.0L7.25 0.5L8.70 2.0L10.15 0.5L11.60 2.0L13.05 0.5L14.34 2.0" fill="none" stroke="#e8242c" stroke-width="0.7"/></svg>
<svg x="287.68" y="258.86" width="14.84" height="2.6" viewBox="0 0 14.84 2.6" overflow="visible"><path d="M0 2.0L1.45 0.5L2.90 2.0L4.35 0.5L5.80 2.0L7.25 0.5L8.70 2.0L10.15 0.5L11.60 2.0L13.05 0.5L14.34 2.0" fill="none" stroke="#e8242c" stroke-width="0.7"/></svg>
<svg x="325.92" y="258.86" width="24.4" height="2.6" viewBox="0 0 24.4 2.6" overflow="visible"><path d="M0 2.0L1.45 0.5L2.90 2.0L4.35 0.5L5.80 2.0L7.25 0.5L8.70 2.0L10.15 0.5L11.60 2.0L13.05 0.5L14.50 2.0L15.95 0.5L17.40 2.0L18.85 0.5L20.30 2.0L21.75 0.5L23.20 2.0L23.90 0.5" fill="none" stroke="#e8242c" stroke-width="0.7"/></svg>
<svg x="378.50" y="281.56" width="19.62" height="2.6" viewBox="0 0 19.62 2.6" overflow="visible"><path d="M0 2.0L1.45 0.5L2.90 2.0L4.35 0.5L5.80 2.0L7.25 0.5L8.70 2.0L10.15 0.5L11.60 2.0L13.05 0.5L14.50 2.0L15.95 0.5L17.40 2.0L18.85 0.5L19.12 2.0" fill="none" stroke="#e8242c" stroke-width="0.7"/></svg>
<svg x="278.12" y="304.25" width="19.62" height="2.6" viewBox="0 0 19.62 2.6" overflow="visible"><path d="M0 2.0L1.45 0.5L2.90 2.0L4.35 0.5L5.80 2.0L7.25 0.5L8.70 2.0L10.15 0.5L11.60 2.0L13.05 0.5L14.50 2.0L15.95 0.5L17.40 2.0L18.85 0.5L19.12 2.0" fill="none" stroke="#e8242c" stroke-width="0.7"/></svg>
<circle cx="202.50" cy="176.20" r="4.10" fill="#e51400"/>
<svg x="199.20" y="297.40" width="7.8" height="7.4" viewBox="0 0 7.8 7.4" overflow="visible"><path d="M0.5 2.3H3.6V0.5L7.3 3.7L3.6 6.9V5.1H0.5Z" fill="#ffd83a" stroke="#8a6d1a" stroke-width="0.8"/></svg>
<svg x="236.20" y="297.60" width="7.4" height="8.6" viewBox="0 0 7.4 8.6" overflow="visible"><path d="M2.8 0.4C0.2 0.4 0 3.2 1.6 4.4V5.8H4V4.4C5.6 3.2 5.4 0.4 2.8 0.4Z" fill="#ffd34d" stroke="#c79a22" stroke-width="0.5"/><circle cx="4.9" cy="6" r="2" fill="#fff" stroke="#e51400" stroke-width="0.9"/><path d="M4.2 5.3L5.6 6.7M5.6 5.3L4.2 6.7" stroke="#e51400" stroke-width="0.6"/></svg>
<svg x="264.80" y="264.00" width="7" height="6" viewBox="0 0 7 6" overflow="visible"><path d="M0.3 0.4L4.4 3L0.3 5.6Z" fill="#3cb43c"/><rect x="5.4" y="0.4" width="0.9" height="5.2" fill="#3cb43c"/></svg>
<rect x="750.80" y="109.60" width="12.40" height="247.00" fill="#ecedf2"/>
<svg x="754.20" y="114.10" width="5.6" height="2.8" viewBox="0 0 5.6 2.8" overflow="visible"><path d="M0 2.8L2.8 0L5.6 2.8Z" fill="#9a9eae"/></svg>
<svg x="754.20" y="349.60" width="5.6" height="2.8" viewBox="0 0 5.6 2.8" overflow="visible"><path d="M0 0H5.6L2.8 2.8Z" fill="#9a9eae"/></svg>
<rect x="754.60" y="168.70" width="5.60" height="88.00" fill="#c8c9d2"/>
<rect x="751.00" y="122.00" width="2.50" height="11.80" fill="#5ad65a"/>
<rect x="751.00" y="143.30" width="2.50" height="31.70" fill="#5ad65a"/>
<rect x="751.00" y="186.20" width="2.50" height="49.20" fill="#5ad65a"/>
<rect x="759.60" y="122.00" width="3.60" height="9.50" fill="#e51400"/>
<rect x="759.60" y="136.00" width="3.60" height="2.60" fill="#e51400"/>
<rect x="759.60" y="187.80" width="3.60" height="3.60" fill="#e51400"/>
<rect x="759.60" y="195.90" width="3.60" height="3.60" fill="#e51400"/>
<rect x="759.60" y="204.00" width="3.60" height="3.60" fill="#e51400"/>
<rect x="759.60" y="212.10" width="3.60" height="3.60" fill="#e51400"/>
<rect x="759.60" y="220.20" width="3.60" height="3.60" fill="#e51400"/>
<rect x="759.60" y="228.30" width="3.60" height="3.60" fill="#e51400"/>
<rect x="755.60" y="192.00" width="3.00" height="3.00" fill="#8c2f3a"/>
<rect x="750.00" y="239.30" width="13.50" height="1.20" fill="#1a1aff"/>
<svg x="754.50" y="237.60" width="5" height="4.6" viewBox="0 0 5 4.6" overflow="visible"><path d="M0 0.6L4 2.3L0 4Z" fill="#1a1aff"/></svg>
<rect x="197.20" y="356.60" width="566.00" height="11.50" fill="#ecedf2"/>
<rect x="197.60" y="357.60" width="39.40" height="10.00" fill="#fff" stroke="#cfd6ee" stroke-width="0.6"/>
<svg x="231.30" y="361.95" width="3.4" height="1.7" viewBox="0 0 3.4 1.7" overflow="visible"><path d="M0 0H3.4L1.7 1.7Z" fill="#1e1e1e"/></svg>
<svg x="256.00" y="359.20" width="7" height="7" viewBox="0 0 7 7" overflow="visible"><circle cx="3.5" cy="3.5" r="3.4" fill="#e0231c"/><path d="M2.1 2.1L4.9 4.9M4.9 2.1L2.1 4.9" stroke="#fff" stroke-width="0.9"/></svg>
<svg x="286.00" y="359.20" width="7.4" height="7" viewBox="0 0 7.4 7" overflow="visible"><path d="M3.7 0.2L7.3 6.8H0.1Z" fill="#f8c50f"/><rect x="3.3" y="2.4" width="0.8" height="2.4" fill="#1e1e1e"/><rect x="3.3" y="5.3" width="0.8" height="0.8" fill="#1e1e1e"/></svg>
<svg x="321.50" y="359.10" width="8.5" height="7" viewBox="0 0 8.5 7" overflow="visible"><path d="M8.5 3.5H1M3.8 0.6L0.8 3.5L3.8 6.4" fill="none" stroke="#1b5fb8" stroke-width="1.1"/></svg>
<svg x="340.50" y="359.10" width="8.5" height="7" viewBox="0 0 8.5 7" overflow="visible"><path d="M0 3.5H7.5M4.7 0.6L7.7 3.5L4.7 6.4" fill="none" stroke="#1b5fb8" stroke-width="1.1"/></svg>
<svg x="371.30" y="360.20" width="2.4" height="4.8" viewBox="0 0 2.4 4.8" overflow="visible"><path d="M2.4 0V4.8L0 2.4Z" fill="#c3c6d3"/></svg>
<svg x="626.10" y="360.20" width="2.4" height="4.8" viewBox="0 0 2.4 4.8" overflow="visible"><path d="M0 0V4.8L2.4 2.4Z" fill="#c3c6d3"/></svg>
<rect x="768.20" y="81.00" width="65.20" height="13.00" fill="#d0d9f2"/>
<svg x="810.50" y="86.00" width="6" height="5" viewBox="0 0 6 5" overflow="visible"><path d="M2.2 0.6V4.2M2.2 1.2H5.4V3.4H2.2M5.4 2.9H2.4M0 2.4H2.2" fill="none" stroke="#4a5588" stroke-width="0.7"/></svg>
<svg x="823.40" y="85.60" width="5.6" height="5.6" viewBox="0 0 5.6 5.6" overflow="visible"><path d="M0.4 0.4L5.2 5.2M5.2 0.4L0.4 5.2" stroke="#4a5588" stroke-width="0.85"/></svg>
<rect x="833.40" y="81.80" width="92.20" height="12.20" fill="#3f538f"/>
<svg x="1013.40" y="87.60" width="4.0" height="2.0" viewBox="0 0 4.0 2.0" overflow="visible"><path d="M0 0H4.0L2.0 2.0Z" fill="#d6dcf2"/></svg>
<rect x="768.30" y="94.00" width="251.00" height="262.60" fill="#fff"/>
<rect x="1008.00" y="94.00" width="11.30" height="262.60" fill="#ecedf2"/>
<svg x="1010.80" y="100.00" width="5.6" height="2.8" viewBox="0 0 5.6 2.8" overflow="visible"><path d="M0 2.8L2.8 0L5.6 2.8Z" fill="#9a9eae"/></svg>
<svg x="1010.80" y="349.90" width="5.6" height="2.8" viewBox="0 0 5.6 2.8" overflow="visible"><path d="M0 0H5.6L2.8 2.8Z" fill="#9a9eae"/></svg>
<rect x="1009.60" y="108.00" width="7.40" height="199.60" fill="#c8c9d2"/>
<rect x="1007.60" y="105.20" width="11.70" height="1.20" fill="#1a1aff"/>
<rect x="768.30" y="356.60" width="251.00" height="11.50" fill="#ecedf2"/>
<rect x="768.70" y="357.80" width="39.60" height="9.80" fill="#fff" stroke="#cfd6ee" stroke-width="0.6"/>
<svg x="802.30" y="361.95" width="3.4" height="1.7" viewBox="0 0 3.4 1.7" overflow="visible"><path d="M0 0H3.4L1.7 1.7Z" fill="#1e1e1e"/></svg>
<svg x="812.50" y="360.20" width="2.4" height="4.8" viewBox="0 0 2.4 4.8" overflow="visible"><path d="M2.4 0V4.8L0 2.4Z" fill="#c3c6d3"/></svg>
<svg x="999.80" y="360.20" width="2.4" height="4.8" viewBox="0 0 2.4 4.8" overflow="visible"><path d="M0 0V4.8L2.4 2.4Z" fill="#c3c6d3"/></svg>
<rect x="197.30" y="373.50" width="204.80" height="14.00" fill="#3f538f"/>
<svg x="369.60" y="379.35" width="5.4" height="2.7" viewBox="0 0 5.4 2.7" overflow="visible"><path d="M0 0H5.4L2.7 2.7Z" fill="#d6dcf2"/></svg>
<svg x="379.50" y="377.00" width="5" height="7.5" viewBox="0 0 5 7.5" overflow="visible"><path d="M1.2 0.4H3.8V4H1.2ZM0.2 4H4.8M2.5 4V7.2" fill="none" stroke="#d6dcf2" stroke-width="0.8"/><path d="M3.3 0.4V4" stroke="#d6dcf2" stroke-width="0.9"/></svg>
<svg x="391.20" y="377.80" width="5.6" height="5.6" viewBox="0 0 5.6 5.6" overflow="visible"><path d="M0.4 0.4L5.2 5.2M5.2 0.4L0.4 5.2" stroke="#d6dcf2" stroke-width="0.85"/></svg>
<rect x="197.30" y="387.50" width="204.80" height="17.10" fill="#ccd5f0"/>
<rect x="198.60" y="388.80" width="84.60" height="13.40" fill="#fdfdff"/>
<svg x="266.50" y="392.10" width="8" height="8" viewBox="0 0 8 8" overflow="visible"><circle cx="5" cy="3" r="2.3" fill="none" stroke="#3a3a3a" stroke-width="1.1"/><path d="M3.4 4.6L0.8 7.3" stroke="#3a3a3a" stroke-width="1.4"/></svg>
<svg x="277.60" y="395.70" width="3.2" height="1.6" viewBox="0 0 3.2 1.6" overflow="visible"><path d="M0 0H3.2L1.6 1.6Z" fill="#3a3a3a"/></svg>
<svg x="289.00" y="392.80" width="9.5" height="7" viewBox="0 0 9.5 7" overflow="visible"><path d="M9.5 3.5H1M3.8 0.6L0.8 3.5L3.8 6.4" fill="none" stroke="#b4b9cc" stroke-width="1.1"/></svg>
<svg x="303.00" y="392.80" width="9.5" height="7" viewBox="0 0 9.5 7" overflow="visible"><path d="M0 3.5H8.5M5.7 0.6L8.7 3.5L5.7 6.4" fill="none" stroke="#b4b9cc" stroke-width="1.1"/></svg>
<rect x="371.00" y="390.20" width="26.00" height="11.60" fill="#f5f7fe"/>
<svg x="390.05" y="395.50" width="4.4" height="2.2" viewBox="0 0 4.4 2.2" overflow="visible"><path d="M0 0H4.4L2.2 2.2Z" fill="#1e1e1e"/></svg>
<rect x="197.30" y="404.60" width="204.80" height="123.90" fill="#fff"/>
<rect x="197.30" y="404.60" width="1.20" height="123.90" fill="#e3e9fa"/>
<rect x="203.40" y="404.60" width="0.60" height="12.40" fill="#d5dcf2"/>
<rect x="203.00" y="416.80" width="188.00" height="0.70" fill="#c5d0ee"/>
<rect x="264.80" y="404.50" width="0.70" height="93.00" fill="#e3e7f3"/>
<rect x="358.80" y="404.50" width="0.70" height="93.00" fill="#e3e7f3"/>
<rect x="264.80" y="404.50" width="0.70" height="12.30" fill="#c5d0ee"/>
<rect x="358.80" y="404.50" width="0.70" height="12.30" fill="#c5d0ee"/>
<rect x="214.20" y="419.20" width="176.60" height="10.40" fill="#efeff3"/>
<rect x="204.00" y="430.00" width="187.00" height="0.60" fill="#e9ebf4"/>
<rect x="204.00" y="441.20" width="187.00" height="0.60" fill="#e9ebf4"/>
<rect x="204.00" y="452.40" width="187.00" height="0.60" fill="#e9ebf4"/>
<rect x="204.00" y="463.60" width="187.00" height="0.60" fill="#e9ebf4"/>
<rect x="204.00" y="474.80" width="187.00" height="0.60" fill="#e9ebf4"/>
<rect x="204.00" y="486.00" width="187.00" height="0.60" fill="#e9ebf4"/>
<rect x="204.00" y="497.20" width="187.00" height="0.60" fill="#e9ebf4"/>
<svg x="215.20" y="420.20" width="7.4" height="6.8" viewBox="0 0 7.4 6.8" overflow="visible"><path d="M0.2 2.2L3.2 0.2L7.2 1.4L7 4.6L4 6.6L0.4 5.2Z" fill="#0c5fc8"/><path d="M0.9 2.4L3.3 0.9L6.3 1.8L3.9 3.4Z" fill="#e4effc"/></svg>
<svg x="215.20" y="431.40" width="7.4" height="6.8" viewBox="0 0 7.4 6.8" overflow="visible"><path d="M0.2 2.2L3.2 0.2L7.2 1.4L7 4.6L4 6.6L0.4 5.2Z" fill="#0c5fc8"/><path d="M0.9 2.4L3.3 0.9L6.3 1.8L3.9 3.4Z" fill="#e4effc"/></svg>
<svg x="215.20" y="442.60" width="8" height="8.6" viewBox="0 0 8 8.6" overflow="visible"><path d="M3.2 1.6L5.6 0.4L7.8 1.5V4.3L5.4 5.6L3.2 4.5Z" fill="#3f7fd0"/><path d="M3.2 1.6L5.4 2.7L7.8 1.5M5.4 2.7V5.6" stroke="#cfe0f7" stroke-width="0.6" fill="none"/><rect x="0.6" y="4.3" width="4.2" height="3.9" fill="#f8f8fb" stroke="#4f5876" stroke-width="0.8"/><path d="M1.5 4.3V3.2C1.5 1.9 3.9 1.9 3.9 3.2V4.3" fill="none" stroke="#4f5876" stroke-width="0.8"/><rect x="2.3" y="5.6" width="0.9" height="1.4" fill="#4f5876"/></svg>
<svg x="215.20" y="453.80" width="8" height="8.6" viewBox="0 0 8 8.6" overflow="visible"><path d="M3.2 1.6L5.6 0.4L7.8 1.5V4.3L5.4 5.6L3.2 4.5Z" fill="#3f7fd0"/><path d="M3.2 1.6L5.4 2.7L7.8 1.5M5.4 2.7V5.6" stroke="#cfe0f7" stroke-width="0.6" fill="none"/><rect x="0.6" y="4.3" width="4.2" height="3.9" fill="#f8f8fb" stroke="#4f5876" stroke-width="0.8"/><path d="M1.5 4.3V3.2C1.5 1.9 3.9 1.9 3.9 3.2V4.3" fill="none" stroke="#4f5876" stroke-width="0.8"/><rect x="2.3" y="5.6" width="0.9" height="1.4" fill="#4f5876"/></svg>
<svg x="215.20" y="465.00" width="8" height="8.6" viewBox="0 0 8 8.6" overflow="visible"><path d="M3.2 1.6L5.6 0.4L7.8 1.5V4.3L5.4 5.6L3.2 4.5Z" fill="#3f7fd0"/><path d="M3.2 1.6L5.4 2.7L7.8 1.5M5.4 2.7V5.6" stroke="#cfe0f7" stroke-width="0.6" fill="none"/><rect x="0.6" y="4.3" width="4.2" height="3.9" fill="#f8f8fb" stroke="#4f5876" stroke-width="0.8"/><path d="M1.5 4.3V3.2C1.5 1.9 3.9 1.9 3.9 3.2V4.3" fill="none" stroke="#4f5876" stroke-width="0.8"/><rect x="2.3" y="5.6" width="0.9" height="1.4" fill="#4f5876"/></svg>
<svg x="215.20" y="476.20" width="8" height="8.6" viewBox="0 0 8 8.6" overflow="visible"><path d="M3.2 1.6L5.6 0.4L7.8 1.5V4.3L5.4 5.6L3.2 4.5Z" fill="#3f7fd0"/><path d="M3.2 1.6L5.4 2.7L7.8 1.5M5.4 2.7V5.6" stroke="#cfe0f7" stroke-width="0.6" fill="none"/><rect x="0.6" y="4.3" width="4.2" height="3.9" fill="#f8f8fb" stroke="#4f5876" stroke-width="0.8"/><path d="M1.5 4.3V3.2C1.5 1.9 3.9 1.9 3.9 3.2V4.3" fill="none" stroke="#4f5876" stroke-width="0.8"/><rect x="2.3" y="5.6" width="0.9" height="1.4" fill="#4f5876"/></svg>
<rect x="391.30" y="404.60" width="10.80" height="123.90" fill="#f1f2f8"/>
<svg x="393.90" y="409.60" width="5.6" height="2.8" viewBox="0 0 5.6 2.8" overflow="visible"><path d="M0 2.8L2.8 0L5.6 2.8Z" fill="#cdd0dc"/></svg>
<svg x="393.90" y="521.60" width="5.6" height="2.8" viewBox="0 0 5.6 2.8" overflow="visible"><path d="M0 0H5.6L2.8 2.8Z" fill="#cdd0dc"/></svg>
<rect x="408.00" y="373.50" width="491.80" height="14.00" fill="#3f538f"/>
<svg x="866.85" y="379.35" width="5.4" height="2.7" viewBox="0 0 5.4 2.7" overflow="visible"><path d="M0 0H5.4L2.7 2.7Z" fill="#d6dcf2"/></svg>
<svg x="877.25" y="377.00" width="5" height="7.5" viewBox="0 0 5 7.5" overflow="visible"><path d="M1.2 0.4H3.8V4H1.2ZM0.2 4H4.8M2.5 4V7.2" fill="none" stroke="#d6dcf2" stroke-width="0.8"/><path d="M3.3 0.4V4" stroke="#d6dcf2" stroke-width="0.9"/></svg>
<svg x="888.45" y="377.80" width="5.6" height="5.6" viewBox="0 0 5.6 5.6" overflow="visible"><path d="M0.4 0.4L5.2 5.2M5.2 0.4L0.4 5.2" stroke="#d6dcf2" stroke-width="0.85"/></svg>
<rect x="408.00" y="387.50" width="491.80" height="17.20" fill="#ccd5f0"/>
<rect x="446.00" y="390.00" width="282.80" height="12.00" fill="#fbfcff"/>
<svg x="719.80" y="395.30" width="4.4" height="2.2" viewBox="0 0 4.4 2.2" overflow="visible"><path d="M0 0H4.4L2.2 2.2Z" fill="#1e1e1e"/></svg>
<svg x="732.60" y="391.40" width="9" height="9.4" viewBox="0 0 9 9.4" overflow="visible"><path d="M6.6 2.4A3.3 3.3 0 1 0 7.6 5.2" fill="none" stroke="#1458b0" stroke-width="1.2"/><path d="M4.4 0.2L7.8 0.6L6.4 3.8Z" fill="#1458b0"/></svg>
<rect x="746.40" y="390.00" width="0.70" height="12.50" fill="#a9b2d2"/>
<rect x="788.50" y="390.00" width="105.50" height="12.00" fill="#fbfcff"/>
<svg x="887.55" y="395.30" width="4.4" height="2.2" viewBox="0 0 4.4 2.2" overflow="visible"><path d="M0 0H4.4L2.2 2.2Z" fill="#1e1e1e"/></svg>
<rect x="408.00" y="404.70" width="491.80" height="111.00" fill="#fff"/>
<rect x="888.60" y="404.70" width="11.20" height="111.00" fill="#f1f2f8"/>
<svg x="891.50" y="409.40" width="5.6" height="2.8" viewBox="0 0 5.6 2.8" overflow="visible"><path d="M0 2.8L2.8 0L5.6 2.8Z" fill="#b9bcc9"/></svg>
<svg x="891.50" y="508.10" width="5.6" height="2.8" viewBox="0 0 5.6 2.8" overflow="visible"><path d="M0 0H5.6L2.8 2.8Z" fill="#b9bcc9"/></svg>
<rect x="408.00" y="515.60" width="28.00" height="12.60" fill="#3f538f"/>
<rect x="437.00" y="515.60" width="37.50" height="12.60" fill="#3f538f"/>
<rect x="475.50" y="515.60" width="34.00" height="12.60" fill="#3f538f"/>
<rect x="510.50" y="515.60" width="41.00" height="12.60" fill="#fff"/>
<rect x="905.00" y="373.50" width="114.70" height="14.00" fill="#3f538f"/>
<svg x="986.85" y="379.35" width="5.4" height="2.7" viewBox="0 0 5.4 2.7" overflow="visible"><path d="M0 0H5.4L2.7 2.7Z" fill="#d6dcf2"/></svg>
<svg x="997.50" y="377.00" width="5" height="7.5" viewBox="0 0 5 7.5" overflow="visible"><path d="M1.2 0.4H3.8V4H1.2ZM0.2 4H4.8M2.5 4V7.2" fill="none" stroke="#d6dcf2" stroke-width="0.8"/><path d="M3.3 0.4V4" stroke="#d6dcf2" stroke-width="0.9"/></svg>
<svg x="1008.95" y="377.80" width="5.6" height="5.6" viewBox="0 0 5.6 5.6" overflow="visible"><path d="M0.4 0.4L5.2 5.2M5.2 0.4L0.4 5.2" stroke="#d6dcf2" stroke-width="0.85"/></svg>
<rect x="905.00" y="387.50" width="114.70" height="17.50" fill="#ccd5f0"/>
<rect x="1015.00" y="389.80" width="0.90" height="1.60" fill="#2a2f45"/>
<rect x="1017.20" y="389.80" width="0.90" height="1.60" fill="#2a2f45"/>
<rect x="905.00" y="405.00" width="114.70" height="111.00" fill="#e9e9ee"/>
<svg x="1010.80" y="409.20" width="5.6" height="2.8" viewBox="0 0 5.6 2.8" overflow="visible"><path d="M0 2.8L2.8 0L5.6 2.8Z" fill="#9da0ad"/></svg>
<svg x="1010.80" y="498.60" width="5.6" height="2.8" viewBox="0 0 5.6 2.8" overflow="visible"><path d="M0 0H5.6L2.8 2.8Z" fill="#9da0ad"/></svg>
<rect x="1010.00" y="416.20" width="7.20" height="51.30" fill="#c2c3c9"/>
<rect x="1007.50" y="437.80" width="11.80" height="1.10" fill="#1a1aff"/>
<svg x="909.80" y="509.20" width="2.4" height="4.8" viewBox="0 0 2.4 4.8" overflow="visible"><path d="M2.4 0V4.8L0 2.4Z" fill="#9da0ad"/></svg>
<svg x="1000.60" y="509.20" width="2.4" height="4.8" viewBox="0 0 2.4 4.8" overflow="visible"><path d="M0 0V4.8L2.4 2.4Z" fill="#9da0ad"/></svg>
<rect x="916.00" y="509.00" width="12.00" height="5.00" fill="#c2c3c9"/>
<rect x="905.00" y="516.00" width="28.00" height="12.50" fill="#3f538f"/>
<rect x="934.00" y="516.00" width="28.00" height="12.50" fill="#3f538f"/>
<rect x="963.00" y="516.00" width="27.50" height="12.50" fill="#fff"/>
<rect x="991.50" y="516.00" width="27.80" height="12.50" fill="#3f538f"/>
<rect x="0.00" y="533.50" width="1024.00" height="15.80" fill="#a7473a"/>
<rect x="0.00" y="548.90" width="32.50" height="2.20" fill="#17171b"/>
<rect x="32.50" y="549.10" width="991.50" height="2.00" fill="#3a3a3c"/>
<rect x="32.50" y="549.00" width="991.50" height="0.50" fill="#6a5a58"/>
<svg x="3.00" y="537.20" width="10" height="8.6" viewBox="0 0 10 8.6" overflow="visible"><path d="M1.4 0.5H9.4L8.2 8H0.3Z" fill="none" stroke="#fff" stroke-width="0.8"/><path d="M3 4.4L4.4 5.8L7 2.6" fill="none" stroke="#fff" stroke-width="0.9"/></svg>
<svg x="883.00" y="538.30" width="6" height="7" viewBox="0 0 6 7" overflow="visible"><path d="M3 7V1M0.5 3.2L3 0.7L5.5 3.2" fill="none" stroke="#f3e4e1" stroke-width="1.3"/></svg>
<svg x="978.40" y="540.50" width="4.4" height="2.2" viewBox="0 0 4.4 2.2" overflow="visible"><path d="M0 2.2L2.2 0L4.4 2.2Z" fill="#fff"/></svg>
<svg x="996.60" y="536.60" width="9" height="9" viewBox="0 0 9 9" overflow="visible"><path d="M0.6 6.8C2 5.6 1.4 2.2 2.8 1C4.2 -0.2 6.2 0.4 6.8 2C7.4 3.6 7 5.6 8.4 6.8Z" fill="#e3c6c1"/><circle cx="4.5" cy="7.8" r="1.1" fill="#e3c6c1"/></svg>
<rect x="1003" y="539.6" width="10" height="8.6" rx="4.3" fill="#fff"/><g style="text-rendering:geometricPrecision"><text x="28.75" y="14" font-family="Liberation Sans" font-size="8.6" fill="#1e1e1e" textLength="12.50" lengthAdjust="spacingAndGlyphs">File</text>
<text x="54.50" y="14" font-family="Liberation Sans" font-size="8.6" fill="#1e1e1e" textLength="13.50" lengthAdjust="spacingAndGlyphs">Edit</text>
<text x="80.75" y="14" font-family="Liberation Sans" font-size="8.6" fill="#1e1e1e" textLength="17.25" lengthAdjust="spacingAndGlyphs">View</text>
<text x="110.50" y="14" font-family="Liberation Sans" font-size="8.6" fill="#1e1e1e" textLength="10.50" lengthAdjust="spacingAndGlyphs">Git</text>
<text x="134.25" y="14" font-family="Liberation Sans" font-size="8.6" fill="#1e1e1e" textLength="24.25" lengthAdjust="spacingAndGlyphs">Project</text>
<text x="171.50" y="14" font-family="Liberation Sans" font-size="8.6" fill="#1e1e1e" textLength="18.00" lengthAdjust="spacingAndGlyphs">Build</text>
<text x="203.00" y="14" font-family="Liberation Sans" font-size="8.6" fill="#1e1e1e" textLength="23.50" lengthAdjust="spacingAndGlyphs">Debug</text>
<text x="240.50" y="14" font-family="Liberation Sans" font-size="8.6" fill="#1e1e1e" textLength="14.50" lengthAdjust="spacingAndGlyphs">Test</text>
<text x="267.50" y="14" font-family="Liberation Sans" font-size="8.6" fill="#1e1e1e" textLength="27.25" lengthAdjust="spacingAndGlyphs">Analyze</text>
<text x="308.00" y="14" font-family="Liberation Sans" font-size="8.6" fill="#1e1e1e" textLength="18.50" lengthAdjust="spacingAndGlyphs">Tools</text>
<text x="339.75" y="14" font-family="Liberation Sans" font-size="8.6" fill="#1e1e1e" textLength="36.75" lengthAdjust="spacingAndGlyphs">Extensions</text>
<text x="389.75" y="14" font-family="Liberation Sans" font-size="8.6" fill="#1e1e1e" textLength="29.25" lengthAdjust="spacingAndGlyphs">Window</text>
<text x="432.50" y="14" font-family="Liberation Sans" font-size="8.6" fill="#1e1e1e" textLength="16.75" lengthAdjust="spacingAndGlyphs">Help</text>
<text x="465.50" y="14" font-family="Liberation Sans" font-size="8.6" fill="#6a6f85" textLength="55.00" lengthAdjust="spacingAndGlyphs">Search (Ctrl+Q)</text>
<text x="627.00" y="14" font-family="Liberation Sans" font-size="8.6" fill="#3a4d86" textLength="25.50" lengthAdjust="spacingAndGlyphs">Project</text>
<text x="907.60" y="13" font-family="Liberation Sans" font-size="6.720000000000001" fill="#fff" textLength="10.00" lengthAdjust="spacingAndGlyphs">MZ</text>
<text x="887.60" y="41" font-family="Liberation Sans" font-size="5.815664214625687" fill="#fff" font-weight="bold" textLength="8.40" lengthAdjust="spacingAndGlyphs">AA</text>
<text x="908.60" y="41" font-family="Liberation Sans" font-size="5.6" fill="#fff" font-weight="bold" textLength="5.00" lengthAdjust="spacingAndGlyphs">LI</text>
<text x="949.25" y="34" font-family="Liberation Sans" font-size="8.6" fill="#1e1e1e" textLength="26.25" lengthAdjust="spacingAndGlyphs">Sharing</text>
<text x="183.00" y="33" font-family="Liberation Sans" font-size="8.6" fill="#9ba1b9" textLength="23.50" lengthAdjust="spacingAndGlyphs">Debug</text>
<text x="230.50" y="33" font-family="Liberation Sans" font-size="8.6" fill="#9ba1b9" textLength="21.50" lengthAdjust="spacingAndGlyphs">Win32</text>
<text x="319.75" y="33" font-family="Liberation Sans" font-size="8.6" fill="#1e1e1e" textLength="30.75" lengthAdjust="spacingAndGlyphs">Continue</text>
<text x="365.25" y="33" font-family="Liberation Sans" font-size="8.6" fill="#9ba1b9" textLength="16.25" lengthAdjust="spacingAndGlyphs">Auto</text>
<text x="15.00" y="50" font-family="Liberation Sans" font-size="8.6" fill="#1e1e1e" textLength="27.50" lengthAdjust="spacingAndGlyphs">Process:</text>
<text x="49.50" y="50" font-family="Liberation Sans" font-size="8.6" fill="#1e1e1e" textLength="67.00" lengthAdjust="spacingAndGlyphs">[16324] Project.exe</text>
<text x="198.25" y="50" font-family="Liberation Sans" font-size="8.6" fill="#7a7f95" textLength="54.25" lengthAdjust="spacingAndGlyphs">Lifecycle Events</text>
<text x="265.25" y="50" font-family="Liberation Sans" font-size="8.6" fill="#1e1e1e" textLength="25.75" lengthAdjust="spacingAndGlyphs">Thread:</text>
<text x="297.75" y="50" font-family="Liberation Sans" font-size="8.6" fill="#1e1e1e" textLength="68.25" lengthAdjust="spacingAndGlyphs">[8048] Main Thread</text>
<text x="475.50" y="50" font-family="Liberation Sans" font-size="8.6" fill="#1e1e1e" textLength="44.75" lengthAdjust="spacingAndGlyphs">Stack Frame:</text>
<text x="527.50" y="50" font-family="Liberation Sans" font-size="8.6" fill="#1e1e1e" textLength="17.00" lengthAdjust="spacingAndGlyphs">main</text>
<text x="19.50" y="71" font-family="Liberation Sans" font-size="8.6" fill="#1e1e1e" textLength="394.75" lengthAdjust="spacingAndGlyphs">Invitation link copied to clipboard! Send it to anyone you trust or click "More info" to learn about secure sharing.</text>
<text x="427.25" y="71" font-family="Liberation Sans" font-size="8.6" fill="#0e6fc0" textLength="34.25" lengthAdjust="spacingAndGlyphs">More info</text>
<text x="474.75" y="71" font-family="Liberation Sans" font-size="8.6" fill="#0e6fc0" textLength="39.75" lengthAdjust="spacingAndGlyphs">Copy again</text>
<text x="527.75" y="71" font-family="Liberation Sans" font-size="8.6" fill="#0e6fc0" textLength="55.50" lengthAdjust="spacingAndGlyphs">Make read-only</text>
<text x="7.00" y="92" font-family="Liberation Sans" font-size="8.6" fill="#fff" textLength="60.50" lengthAdjust="spacingAndGlyphs">Solution Explorer</text>
<text x="8.25" y="125" font-family="Liberation Sans" font-size="8.6" fill="#6a6f85" textLength="112.50" lengthAdjust="spacingAndGlyphs">Search Solution Explorer (Ctrl+;)</text>
<text x="28.00" y="139" font-family="Liberation Sans" font-size="8.6" fill="#1e1e1e" textLength="114.50" lengthAdjust="spacingAndGlyphs">Solution 'Project' (1 of 1 project)</text>
<text x="40.00" y="151" font-family="Liberation Sans" font-size="8.6" fill="#1e1e1e" font-weight="bold" textLength="26.00" lengthAdjust="spacingAndGlyphs">Project</text>
<text x="52.50" y="164" font-family="Liberation Sans" font-size="8.6" fill="#1e1e1e" textLength="38.00" lengthAdjust="spacingAndGlyphs">References</text>
<text x="52.50" y="176" font-family="Liberation Sans" font-size="8.6" fill="#1e1e1e" textLength="80.00" lengthAdjust="spacingAndGlyphs">External Dependencies</text>
<text x="52.50" y="188" font-family="Liberation Sans" font-size="8.6" fill="#1e1e1e" textLength="33.25" lengthAdjust="spacingAndGlyphs">main.asm</text>
<text x="8.00" y="375" font-family="Liberation Sans" font-size="8.6" fill="#1e1e1e" textLength="60.25" lengthAdjust="spacingAndGlyphs">Solution Explorer</text>
<text x="76.50" y="375" font-family="Liberation Sans" font-size="8.6" fill="#dfe5f7" textLength="36.50" lengthAdjust="spacingAndGlyphs">Class View</text>
<text x="7.50" y="393" font-family="Liberation Sans" font-size="8.6" fill="#fff" textLength="19.50" lengthAdjust="spacingAndGlyphs">Autos</text>
<text x="8.00" y="409" font-family="Liberation Sans" font-size="8.6" fill="#6a6f85" textLength="43.20" lengthAdjust="spacingAndGlyphs">Search (Ctrl-</text>
<text x="107.20" y="409" font-family="Liberation Sans" font-size="8.6" fill="#1e1e1e" textLength="48.80" lengthAdjust="spacingAndGlyphs">Search Depth:</text>
<text x="163.40" y="409" font-family="Liberation Sans" font-size="8.6" fill="#1e1e1e">3</text>
<text x="13.60" y="424" font-family="Liberation Sans" font-size="8.6" fill="#1e1e1e" textLength="20.80" lengthAdjust="spacingAndGlyphs">Name</text>
<text x="69.60" y="424" font-family="Liberation Sans" font-size="8.6" fill="#1e1e1e" textLength="20.00" lengthAdjust="spacingAndGlyphs">Value</text>
<text x="155.20" y="424" font-family="Liberation Sans" font-size="8.6" fill="#1e1e1e" textLength="16.80" lengthAdjust="spacingAndGlyphs">Type</text>
<text x="35.20" y="437" font-family="Liberation Sans" font-size="8.6" fill="#1e1e1e" textLength="14.80" lengthAdjust="spacingAndGlyphs">Rval</text>
<text x="69.60" y="437" font-family="Liberation Sans" font-size="8.6" fill="#e8242c" textLength="11.60" lengthAdjust="spacingAndGlyphs">-36</text>
<text x="155.20" y="437" font-family="Liberation Sans" font-size="8.6" fill="#1e1e1e" textLength="14.80" lengthAdjust="spacingAndGlyphs">long</text>
<text x="35.20" y="448" font-family="Liberation Sans" font-size="8.6" fill="#1e1e1e" textLength="12.00" lengthAdjust="spacingAndGlyphs">eax</text>
<text x="69.60" y="448" font-family="Liberation Sans" font-size="8.6" fill="#1e1e1e" textLength="42.40" lengthAdjust="spacingAndGlyphs">4294967270</text>
<text x="155.20" y="448" font-family="Liberation Sans" font-size="8.6" fill="#1e1e1e" textLength="22.80" lengthAdjust="spacingAndGlyphs">unsig...</text>
<text x="35.20" y="459" font-family="Liberation Sans" font-size="8.6" fill="#1e1e1e" textLength="12.80" lengthAdjust="spacingAndGlyphs">ebx</text>
<text x="69.60" y="459" font-family="Liberation Sans" font-size="8.6" fill="#1e1e1e" textLength="42.40" lengthAdjust="spacingAndGlyphs">4294967286</text>
<text x="155.20" y="459" font-family="Liberation Sans" font-size="8.6" fill="#1e1e1e" textLength="22.80" lengthAdjust="spacingAndGlyphs">unsig...</text>
<text x="200.00" y="91" font-family="Liberation Sans" font-size="8.6" fill="#1e1e1e" textLength="33.00" lengthAdjust="spacingAndGlyphs">main.asm</text>
<text x="211.25" y="106" font-family="Liberation Sans" font-size="8.6" fill="#1e1e1e" textLength="23.75" lengthAdjust="spacingAndGlyphs">Project</text>
<text x="396.50" y="106" font-family="Liberation Sans" font-size="8.6" fill="#1e1e1e" textLength="52.00" lengthAdjust="spacingAndGlyphs">(Global Scope)</text>
<text x="278.12" y="111" font-family="Liberation Mono" font-size="8.6" fill="#1e1e1e" textLength="66.92" lengthAdjust="spacingAndGlyphs" clip-path="url(#edclip)">Zval SDWORD 40</text>
<text x="222.64" y="111" font-family="Liberation Mono" font-size="8.6" fill="#2b91af" textLength="9.56" lengthAdjust="spacingAndGlyphs" clip-path="url(#edclip)">12</text>
<text x="222.64" y="122" font-family="Liberation Mono" font-size="8.6" fill="#2b91af" textLength="9.56" lengthAdjust="spacingAndGlyphs">13</text>
<text x="222.64" y="134" font-family="Liberation Mono" font-size="8.6" fill="#2b91af" textLength="9.56" lengthAdjust="spacingAndGlyphs">14</text>
<text x="222.64" y="145" font-family="Liberation Mono" font-size="8.6" fill="#2b91af" textLength="9.56" lengthAdjust="spacingAndGlyphs">15</text>
<text x="222.64" y="156" font-family="Liberation Mono" font-size="8.6" fill="#2b91af" textLength="9.56" lengthAdjust="spacingAndGlyphs">16</text>
<text x="222.64" y="168" font-family="Liberation Mono" font-size="8.6" fill="#2b91af" textLength="9.56" lengthAdjust="spacingAndGlyphs">17</text>
<text x="222.64" y="179" font-family="Liberation Mono" font-size="8.6" fill="#2b91af" textLength="9.56" lengthAdjust="spacingAndGlyphs">18</text>
<text x="222.64" y="190" font-family="Liberation Mono" font-size="8.6" fill="#2b91af" textLength="9.56" lengthAdjust="spacingAndGlyphs">19</text>
<text x="222.64" y="202" font-family="Liberation Mono" font-size="8.6" fill="#2b91af" textLength="9.56" lengthAdjust="spacingAndGlyphs">20</text>
<text x="222.64" y="213" font-family="Liberation Mono" font-size="8.6" fill="#2b91af" textLength="9.56" lengthAdjust="spacingAndGlyphs">21</text>
<text x="222.64" y="224" font-family="Liberation Mono" font-size="8.6" fill="#2b91af" textLength="9.56" lengthAdjust="spacingAndGlyphs">22</text>
<text x="222.64" y="236" font-family="Liberation Mono" font-size="8.6" fill="#2b91af" textLength="9.56" lengthAdjust="spacingAndGlyphs">23</text>
<text x="222.64" y="247" font-family="Liberation Mono" font-size="8.6" fill="#2b91af" textLength="9.56" lengthAdjust="spacingAndGlyphs">24</text>
<text x="222.64" y="258" font-family="Liberation Mono" font-size="8.6" fill="#2b91af" textLength="9.56" lengthAdjust="spacingAndGlyphs">25</text>
<text x="222.64" y="270" font-family="Liberation Mono" font-size="8.6" fill="#2b91af" textLength="9.56" lengthAdjust="spacingAndGlyphs">26</text>
<text x="222.64" y="281" font-family="Liberation Mono" font-size="8.6" fill="#2b91af" textLength="9.56" lengthAdjust="spacingAndGlyphs">27</text>
<text x="222.64" y="292" font-family="Liberation Mono" font-size="8.6" fill="#2b91af" textLength="9.56" lengthAdjust="spacingAndGlyphs">28</text>
<text x="222.64" y="304" font-family="Liberation Mono" font-size="8.6" fill="#2b91af" textLength="9.56" lengthAdjust="spacingAndGlyphs">29</text>
<text x="222.64" y="315" font-family="Liberation Mono" font-size="8.6" fill="#2b91af" textLength="9.56" lengthAdjust="spacingAndGlyphs">30</text>
<text x="222.64" y="326" font-family="Liberation Mono" font-size="8.6" fill="#2b91af" textLength="9.56" lengthAdjust="spacingAndGlyphs">31</text>
<text x="222.64" y="338" font-family="Liberation Mono" font-size="8.6" fill="#2b91af" textLength="9.56" lengthAdjust="spacingAndGlyphs">32</text>
<text x="259.00" y="134" font-family="Liberation Mono" font-size="8.6" fill="#1e1e1e" textLength="23.90" lengthAdjust="spacingAndGlyphs">.code</text>
<text x="259.00" y="145" font-family="Liberation Mono" font-size="8.6" fill="#1e1e1e" textLength="43.02" lengthAdjust="spacingAndGlyphs">main PROC</text>
<text x="278.12" y="168" font-family="Liberation Mono" font-size="8.6" fill="#1e1e1e" textLength="90.82" lengthAdjust="spacingAndGlyphs">; first term: -Xval</text>
<text x="278.12" y="179" font-family="Liberation Mono" font-size="8.6" fill="#1e1e1e" textLength="76.48" lengthAdjust="spacingAndGlyphs">mov    eax, Xval</text>
<text x="278.12" y="190" font-family="Liberation Mono" font-size="8.6" fill="#1e1e1e" textLength="143.40" lengthAdjust="spacingAndGlyphs">neg    eax         ; EAX = -26</text>
<text x="278.12" y="213" font-family="Liberation Mono" font-size="8.6" fill="#1e1e1e" textLength="133.84" lengthAdjust="spacingAndGlyphs">; second term: (Yval - Zval)</text>
<text x="278.12" y="224" font-family="Liberation Mono" font-size="8.6" fill="#1e1e1e" textLength="76.48" lengthAdjust="spacingAndGlyphs">mov    ebx, Yval</text>
<text x="278.12" y="236" font-family="Liberation Mono" font-size="8.6" fill="#1e1e1e" textLength="138.62" lengthAdjust="spacingAndGlyphs">sub    ebx, Zval  ; EBX = -10</text>
<text x="278.12" y="258" font-family="Liberation Mono" font-size="8.6" fill="#1e1e1e" textLength="124.28" lengthAdjust="spacingAndGlyphs">; add the terms and store:</text>
<text x="278.12" y="270" font-family="Liberation Mono" font-size="8.6" fill="#1e1e1e" textLength="81.26" lengthAdjust="spacingAndGlyphs">mov    Rval,  eax</text>
<text x="278.12" y="281" font-family="Liberation Mono" font-size="8.6" fill="#1e1e1e" textLength="148.18" lengthAdjust="spacingAndGlyphs">add    Rval,  ebx  ; Rval = -36</text>
<text x="259.00" y="315" font-family="Liberation Mono" font-size="8.6" fill="#1e1e1e" textLength="43.02" lengthAdjust="spacingAndGlyphs">main ENDP</text>
<text x="259.00" y="338" font-family="Liberation Mono" font-size="8.6" fill="#1e1e1e" textLength="38.24" lengthAdjust="spacingAndGlyphs">END main</text>
<text x="278.12" y="304" font-family="Liberation Mono" font-size="8.6" fill="#1e1e1e" textLength="19.12" lengthAdjust="spacingAndGlyphs">exit</text>
<text x="303.90" y="304" font-family="Liberation Sans" font-size="6.6" fill="#a9a9b2" textLength="41.30" lengthAdjust="spacingAndGlyphs">≤ 1ms elapsed</text>
<text x="200.00" y="366" font-family="Liberation Sans" font-size="8.6" fill="#1e1e1e" textLength="20.00" lengthAdjust="spacingAndGlyphs">100 %</text>
<text x="266.50" y="366" font-family="Liberation Sans" font-size="8.6" fill="#1e1e1e" textLength="8.25" lengthAdjust="spacingAndGlyphs">19</text>
<text x="296.75" y="366" font-family="Liberation Sans" font-size="8.6" fill="#1e1e1e" textLength="4.25" lengthAdjust="spacingAndGlyphs">0</text>
<text x="648.50" y="366" font-family="Liberation Sans" font-size="8.6" fill="#1e1e1e" textLength="20.30" lengthAdjust="spacingAndGlyphs">Ln: 29</text>
<text x="680.70" y="366" font-family="Liberation Sans" font-size="8.6" fill="#1e1e1e" textLength="16.90" lengthAdjust="spacingAndGlyphs">Ch: 1</text>
<text x="710.80" y="366" font-family="Liberation Sans" font-size="8.6" fill="#1e1e1e" textLength="16.10" lengthAdjust="spacingAndGlyphs">TABS</text>
<text x="740.00" y="366" font-family="Liberation Sans" font-size="8.6" fill="#1e1e1e" textLength="16.50" lengthAdjust="spacingAndGlyphs">CRLF</text>
<text x="771.50" y="91" font-family="Liberation Sans" font-size="8.6" fill="#1e2a55" textLength="31.70" lengthAdjust="spacingAndGlyphs">Registers</text>
<text x="836.60" y="91" font-family="Liberation Sans" font-size="8.6" fill="#fff" textLength="58.80" lengthAdjust="spacingAndGlyphs">Diagnostic Tools</text>
<text x="776.90" y="104" font-family="Liberation Mono" font-size="8.6" fill="#1e1e1e" textLength="210.76" lengthAdjust="spacingAndGlyphs">EAX = FFFFFFE6 EBX = FFFFFFF6 ECX = 00401005</text>
<text x="776.90" y="115" font-family="Liberation Mono" font-size="8.6" fill="#1e1e1e" textLength="220.34" lengthAdjust="spacingAndGlyphs">  EDX = 00401005 ESI = 00401005 EDI = 00401005</text>
<text x="776.90" y="127" font-family="Liberation Mono" font-size="8.6" fill="#1e1e1e" textLength="38.32" lengthAdjust="spacingAndGlyphs">  EIP = </text>
<text x="815.22" y="127" font-family="Liberation Mono" font-size="8.6" fill="#e51a24" textLength="38.32" lengthAdjust="spacingAndGlyphs">0040102E</text>
<text x="853.54" y="127" font-family="Liberation Mono" font-size="8.6" fill="#1e1e1e" textLength="143.70" lengthAdjust="spacingAndGlyphs"> ESP = 0019FF74 EBP = 0019FF80</text>
<text x="776.90" y="138" font-family="Liberation Mono" font-size="8.6" fill="#1e1e1e" textLength="38.32" lengthAdjust="spacingAndGlyphs">  EFL = </text>
<text x="815.22" y="138" font-family="Liberation Mono" font-size="8.6" fill="#e51a24" textLength="38.32" lengthAdjust="spacingAndGlyphs">00000283</text>
<text x="771.00" y="366" font-family="Liberation Sans" font-size="8.6" fill="#1e1e1e" textLength="20.50" lengthAdjust="spacingAndGlyphs">100 %</text>
<text x="200.00" y="384" font-family="Liberation Sans" font-size="8.6" fill="#fff" textLength="27.20" lengthAdjust="spacingAndGlyphs">Watch 1</text>
<text x="200.80" y="399" font-family="Liberation Sans" font-size="8.6" fill="#6a6f85" textLength="52.00" lengthAdjust="spacingAndGlyphs">Search (Ctrl+E)</text>
<text x="317.25" y="399" font-family="Liberation Sans" font-size="8.6" fill="#1e1e1e" textLength="48.75" lengthAdjust="spacingAndGlyphs">Search Depth:</text>
<text x="375.00" y="399" font-family="Liberation Sans" font-size="8.6" fill="#1e1e1e">3</text>
<text x="206.00" y="415" font-family="Liberation Sans" font-size="8.6" fill="#1e1e1e" textLength="21.20" lengthAdjust="spacingAndGlyphs">Name</text>
<text x="268.00" y="415" font-family="Liberation Sans" font-size="8.6" fill="#1e1e1e" textLength="20.00" lengthAdjust="spacingAndGlyphs">Value</text>
<text x="362.00" y="415" font-family="Liberation Sans" font-size="8.6" fill="#1e1e1e" textLength="17.20" lengthAdjust="spacingAndGlyphs">Type</text>
<text x="227.20" y="427" font-family="Liberation Sans" font-size="8.6" fill="#1e1e1e" textLength="12.80" lengthAdjust="spacingAndGlyphs">eax</text>
<text x="268.00" y="427" font-family="Liberation Sans" font-size="8.6" fill="#1e1e1e" textLength="42.00" lengthAdjust="spacingAndGlyphs">4294967270</text>
<text x="362.00" y="427" font-family="Liberation Sans" font-size="8.6" fill="#1e1e1e" textLength="26.80" lengthAdjust="spacingAndGlyphs">unsign...</text>
<text x="227.20" y="439" font-family="Liberation Sans" font-size="8.6" fill="#1e1e1e" textLength="13.60" lengthAdjust="spacingAndGlyphs">ebx</text>
<text x="268.00" y="439" font-family="Liberation Sans" font-size="8.6" fill="#1e1e1e" textLength="42.00" lengthAdjust="spacingAndGlyphs">4294967286</text>
<text x="362.00" y="439" font-family="Liberation Sans" font-size="8.6" fill="#1e1e1e" textLength="26.80" lengthAdjust="spacingAndGlyphs">unsign...</text>
<text x="227.20" y="450" font-family="Liberation Sans" font-size="8.6" fill="#1e1e1e" textLength="15.20" lengthAdjust="spacingAndGlyphs">Rval</text>
<text x="268.00" y="450" font-family="Liberation Sans" font-size="8.6" fill="#e8242c" textLength="11.20" lengthAdjust="spacingAndGlyphs">-36</text>
<text x="362.00" y="450" font-family="Liberation Sans" font-size="8.6" fill="#1e1e1e" textLength="14.80" lengthAdjust="spacingAndGlyphs">long</text>
<text x="227.20" y="461" font-family="Liberation Sans" font-size="8.6" fill="#1e1e1e" textLength="15.20" lengthAdjust="spacingAndGlyphs">Xval</text>
<text x="268.00" y="461" font-family="Liberation Sans" font-size="8.6" fill="#1e1e1e" textLength="9.00" lengthAdjust="spacingAndGlyphs">26</text>
<text x="362.00" y="461" font-family="Liberation Sans" font-size="8.6" fill="#1e1e1e" textLength="14.80" lengthAdjust="spacingAndGlyphs">long</text>
<text x="227.20" y="472" font-family="Liberation Sans" font-size="8.6" fill="#1e1e1e" textLength="15.20" lengthAdjust="spacingAndGlyphs">Yval</text>
<text x="268.00" y="472" font-family="Liberation Sans" font-size="8.6" fill="#1e1e1e" textLength="9.00" lengthAdjust="spacingAndGlyphs">30</text>
<text x="362.00" y="472" font-family="Liberation Sans" font-size="8.6" fill="#1e1e1e" textLength="14.80" lengthAdjust="spacingAndGlyphs">long</text>
<text x="227.20" y="483" font-family="Liberation Sans" font-size="8.6" fill="#1e1e1e" textLength="15.20" lengthAdjust="spacingAndGlyphs">Zval</text>
<text x="268.00" y="483" font-family="Liberation Sans" font-size="8.6" fill="#1e1e1e" textLength="9.00" lengthAdjust="spacingAndGlyphs">40</text>
<text x="362.00" y="483" font-family="Liberation Sans" font-size="8.6" fill="#1e1e1e" textLength="14.80" lengthAdjust="spacingAndGlyphs">long</text>
<text x="205.20" y="495" font-family="Liberation Sans" font-size="8.6" fill="#85889a" font-style="italic" textLength="59.20" lengthAdjust="spacingAndGlyphs">Add item to wat...</text>
<text x="410.00" y="384" font-family="Liberation Sans" font-size="8.6" fill="#fff" textLength="34.80" lengthAdjust="spacingAndGlyphs">Memory 1</text>
<text x="412.80" y="400" font-family="Liberation Sans" font-size="8.6" fill="#1e1e1e" textLength="29.20" lengthAdjust="spacingAndGlyphs">Address:</text>
<text x="448.00" y="400" font-family="Liberation Sans" font-size="8.6" fill="#1e1e1e" textLength="42.00" lengthAdjust="spacingAndGlyphs">0x00404000</text>
<text x="752.00" y="400" font-family="Liberation Sans" font-size="8.6" fill="#1e1e1e" textLength="32.00" lengthAdjust="spacingAndGlyphs">Columns:</text>
<text x="790.50" y="400" font-family="Liberation Sans" font-size="8.6" fill="#1e1e1e" textLength="16.25" lengthAdjust="spacingAndGlyphs">Auto</text>
<text x="409.40" y="413" font-family="Liberation Mono" font-size="8.6" fill="#8f8f8f" textLength="47.75" lengthAdjust="spacingAndGlyphs" clip-path="url(#memclip)">0x00404000</text>
<text x="466.70" y="413" font-family="Liberation Mono" font-size="8.6" fill="#e51a24" textLength="9.55" lengthAdjust="spacingAndGlyphs" clip-path="url(#memclip)">dc</text>
<text x="481.02" y="413" font-family="Liberation Mono" font-size="8.6" fill="#1e1e1e" textLength="281.73" lengthAdjust="spacingAndGlyphs" clip-path="url(#memclip)">ff ff ff 1a 00 00 00 1e 00 00 00 28 00 00 00 00 00 00 00 00</text>
<text x="775.16" y="413" font-family="Liberation Mono" font-size="8.6" fill="#e51a24" textLength="4.78" lengthAdjust="spacingAndGlyphs" clip-path="url(#memclip)">Ü</text>
<text x="779.94" y="413" font-family="Liberation Mono" font-size="8.6" fill="#1e1e1e" textLength="95.50" lengthAdjust="spacingAndGlyphs" clip-path="url(#memclip)">ÿÿÿ........(........</text>
<text x="409.40" y="424" font-family="Liberation Mono" font-size="8.6" fill="#8f8f8f" textLength="47.75" lengthAdjust="spacingAndGlyphs" clip-path="url(#memclip)">0x00404015</text>
<text x="466.70" y="424" font-family="Liberation Mono" font-size="8.6" fill="#1e1e1e" textLength="296.05" lengthAdjust="spacingAndGlyphs" clip-path="url(#memclip)">00 00 00 00 00 00 00 00 00 00 00 00 00 00 00 00 00 00 00 00 00</text>
<text x="775.16" y="424" font-family="Liberation Mono" font-size="8.6" fill="#1e1e1e" textLength="100.28" lengthAdjust="spacingAndGlyphs" clip-path="url(#memclip)">.....................</text>
<text x="409.40" y="436" font-family="Liberation Mono" font-size="8.6" fill="#8f8f8f" textLength="47.75" lengthAdjust="spacingAndGlyphs" clip-path="url(#memclip)">0x0040402A</text>
<text x="466.70" y="436" font-family="Liberation Mono" font-size="8.6" fill="#1e1e1e" textLength="296.05" lengthAdjust="spacingAndGlyphs" clip-path="url(#memclip)">00 00 00 00 00 00 00 00 00 00 00 00 00 00 00 00 00 00 00 00 00</text>
<text x="775.16" y="436" font-family="Liberation Mono" font-size="8.6" fill="#1e1e1e" textLength="100.28" lengthAdjust="spacingAndGlyphs" clip-path="url(#memclip)">.....................</text>
<text x="409.40" y="447" font-family="Liberation Mono" font-size="8.6" fill="#8f8f8f" textLength="47.75" lengthAdjust="spacingAndGlyphs" clip-path="url(#memclip)">0x0040403F</text>
<text x="466.70" y="447" font-family="Liberation Mono" font-size="8.6" fill="#1e1e1e" textLength="296.05" lengthAdjust="spacingAndGlyphs" clip-path="url(#memclip)">00 00 00 00 00 00 00 00 00 00 00 00 00 00 00 00 00 00 00 00 00</text>
<text x="775.16" y="447" font-family="Liberation Mono" font-size="8.6" fill="#1e1e1e" textLength="100.28" lengthAdjust="spacingAndGlyphs" clip-path="url(#memclip)">.....................</text>
<text x="409.40" y="458" font-family="Liberation Mono" font-size="8.6" fill="#8f8f8f" textLength="47.75" lengthAdjust="spacingAndGlyphs" clip-path="url(#memclip)">0x00404054</text>
<text x="466.70" y="458" font-family="Liberation Mono" font-size="8.6" fill="#1e1e1e" textLength="296.05" lengthAdjust="spacingAndGlyphs" clip-path="url(#memclip)">00 00 00 00 00 00 00 00 00 00 00 00 00 00 00 00 00 00 00 00 00</text>
<text x="775.16" y="458" font-family="Liberation Mono" font-size="8.6" fill="#1e1e1e" textLength="100.28" lengthAdjust="spacingAndGlyphs" clip-path="url(#memclip)">.....................</text>
<text x="409.40" y="470" font-family="Liberation Mono" font-size="8.6" fill="#8f8f8f" textLength="47.75" lengthAdjust="spacingAndGlyphs" clip-path="url(#memclip)">0x00404069</text>
<text x="466.70" y="470" font-family="Liberation Mono" font-size="8.6" fill="#1e1e1e" textLength="296.05" lengthAdjust="spacingAndGlyphs" clip-path="url(#memclip)">00 00 00 00 00 00 00 00 00 00 00 00 00 00 00 00 00 00 00 00 00</text>
<text x="775.16" y="470" font-family="Liberation Mono" font-size="8.6" fill="#1e1e1e" textLength="100.28" lengthAdjust="spacingAndGlyphs" clip-path="url(#memclip)">.....................</text>
<text x="409.40" y="481" font-family="Liberation Mono" font-size="8.6" fill="#8f8f8f" textLength="47.75" lengthAdjust="spacingAndGlyphs" clip-path="url(#memclip)">0x0040407E</text>
<text x="466.70" y="481" font-family="Liberation Mono" font-size="8.6" fill="#1e1e1e" textLength="296.05" lengthAdjust="spacingAndGlyphs" clip-path="url(#memclip)">00 00 00 00 00 00 00 00 00 00 00 00 00 00 00 00 00 00 00 00 00</text>
<text x="775.16" y="481" font-family="Liberation Mono" font-size="8.6" fill="#1e1e1e" textLength="100.28" lengthAdjust="spacingAndGlyphs" clip-path="url(#memclip)">.....................</text>
<text x="409.40" y="493" font-family="Liberation Mono" font-size="8.6" fill="#8f8f8f" textLength="47.75" lengthAdjust="spacingAndGlyphs" clip-path="url(#memclip)">0x00404093</text>
<text x="466.70" y="493" font-family="Liberation Mono" font-size="8.6" fill="#1e1e1e" textLength="296.05" lengthAdjust="spacingAndGlyphs" clip-path="url(#memclip)">00 00 00 00 00 00 00 00 00 00 00 00 00 00 00 00 00 00 00 00 00</text>
<text x="775.16" y="493" font-family="Liberation Mono" font-size="8.6" fill="#1e1e1e" textLength="100.28" lengthAdjust="spacingAndGlyphs" clip-path="url(#memclip)">.....................</text>
<text x="409.40" y="504" font-family="Liberation Mono" font-size="8.6" fill="#8f8f8f" textLength="47.75" lengthAdjust="spacingAndGlyphs" clip-path="url(#memclip)">0x004040A8</text>
<text x="466.70" y="504" font-family="Liberation Mono" font-size="8.6" fill="#1e1e1e" textLength="296.05" lengthAdjust="spacingAndGlyphs" clip-path="url(#memclip)">00 00 00 00 00 00 00 00 00 00 00 00 00 00 00 00 00 00 00 00 00</text>
<text x="775.16" y="504" font-family="Liberation Mono" font-size="8.6" fill="#1e1e1e" textLength="100.28" lengthAdjust="spacingAndGlyphs" clip-path="url(#memclip)">.....................</text>
<text x="409.40" y="515" font-family="Liberation Mono" font-size="8.6" fill="#8f8f8f" textLength="47.75" lengthAdjust="spacingAndGlyphs" clip-path="url(#memclip)">0x004040BD</text>
<text x="466.70" y="515" font-family="Liberation Mono" font-size="8.6" fill="#1e1e1e" textLength="296.05" lengthAdjust="spacingAndGlyphs" clip-path="url(#memclip)">00 00 00 00 00 00 00 00 00 00 00 00 00 00 00 00 00 00 00 00 00</text>
<text x="775.16" y="515" font-family="Liberation Mono" font-size="8.6" fill="#1e1e1e" textLength="100.28" lengthAdjust="spacingAndGlyphs" clip-path="url(#memclip)">.....................</text>
<text x="410.50" y="526" font-family="Liberation Sans" font-size="8.6" fill="#dfe5f7" textLength="21.75" lengthAdjust="spacingAndGlyphs">Locals</text>
<text x="440.25" y="526" font-family="Liberation Sans" font-size="8.6" fill="#dfe5f7" textLength="30.00" lengthAdjust="spacingAndGlyphs">Modules</text>
<text x="478.00" y="526" font-family="Liberation Sans" font-size="8.6" fill="#dfe5f7" textLength="27.50" lengthAdjust="spacingAndGlyphs">Threads</text>
<text x="514.00" y="526" font-family="Liberation Sans" font-size="8.6" fill="#1e1e1e" textLength="34.00" lengthAdjust="spacingAndGlyphs">Memory 1</text>
<text x="906.75" y="384" font-family="Liberation Sans" font-size="8.6" fill="#fff" textLength="24.25" lengthAdjust="spacingAndGlyphs">Output</text>
<text x="914.20" y="413" font-family="Liberation Mono" font-size="7.5" fill="#2a2a2a" textLength="92.18" lengthAdjust="spacingAndGlyphs">'Project.exe' (Win32):</text>
<text x="914.20" y="423" font-family="Liberation Mono" font-size="7.5" fill="#2a2a2a" textLength="92.18" lengthAdjust="spacingAndGlyphs">'Project.exe' (Win32):</text>
<text x="914.20" y="434" font-family="Liberation Mono" font-size="7.5" fill="#2a2a2a" textLength="92.18" lengthAdjust="spacingAndGlyphs">'Project.exe' (Win32):</text>
<text x="914.20" y="444" font-family="Liberation Mono" font-size="7.5" fill="#2a2a2a" textLength="92.18" lengthAdjust="spacingAndGlyphs">'Project.exe' (Win32):</text>
<text x="908.50" y="526" font-family="Liberation Sans" font-size="8.6" fill="#dfe5f7" textLength="18.25" lengthAdjust="spacingAndGlyphs">Call...</text>
<text x="937.50" y="526" font-family="Liberation Sans" font-size="8.6" fill="#dfe5f7" textLength="16.75" lengthAdjust="spacingAndGlyphs">Bre...</text>
<text x="966.75" y="526" font-family="Liberation Sans" font-size="8.6" fill="#1e1e1e" textLength="17.50" lengthAdjust="spacingAndGlyphs">Out...</text>
<text x="995.50" y="526" font-family="Liberation Sans" font-size="8.6" fill="#dfe5f7" textLength="17.00" lengthAdjust="spacingAndGlyphs">Exc...</text>
<text x="18.75" y="545" font-family="Liberation Sans" font-size="8.6" fill="#fff" textLength="21.25" lengthAdjust="spacingAndGlyphs">Ready</text>
<text x="895.00" y="545" font-family="Liberation Sans" font-size="8.6" fill="#fff" textLength="78.50" lengthAdjust="spacingAndGlyphs">Add to Source Control</text>
<text x="1004.60" y="546" font-family="Liberation Sans" font-size="6.8" fill="#1e1e1e" textLength="7.00" lengthAdjust="spacingAndGlyphs">13</text></g></svg></body></html>
